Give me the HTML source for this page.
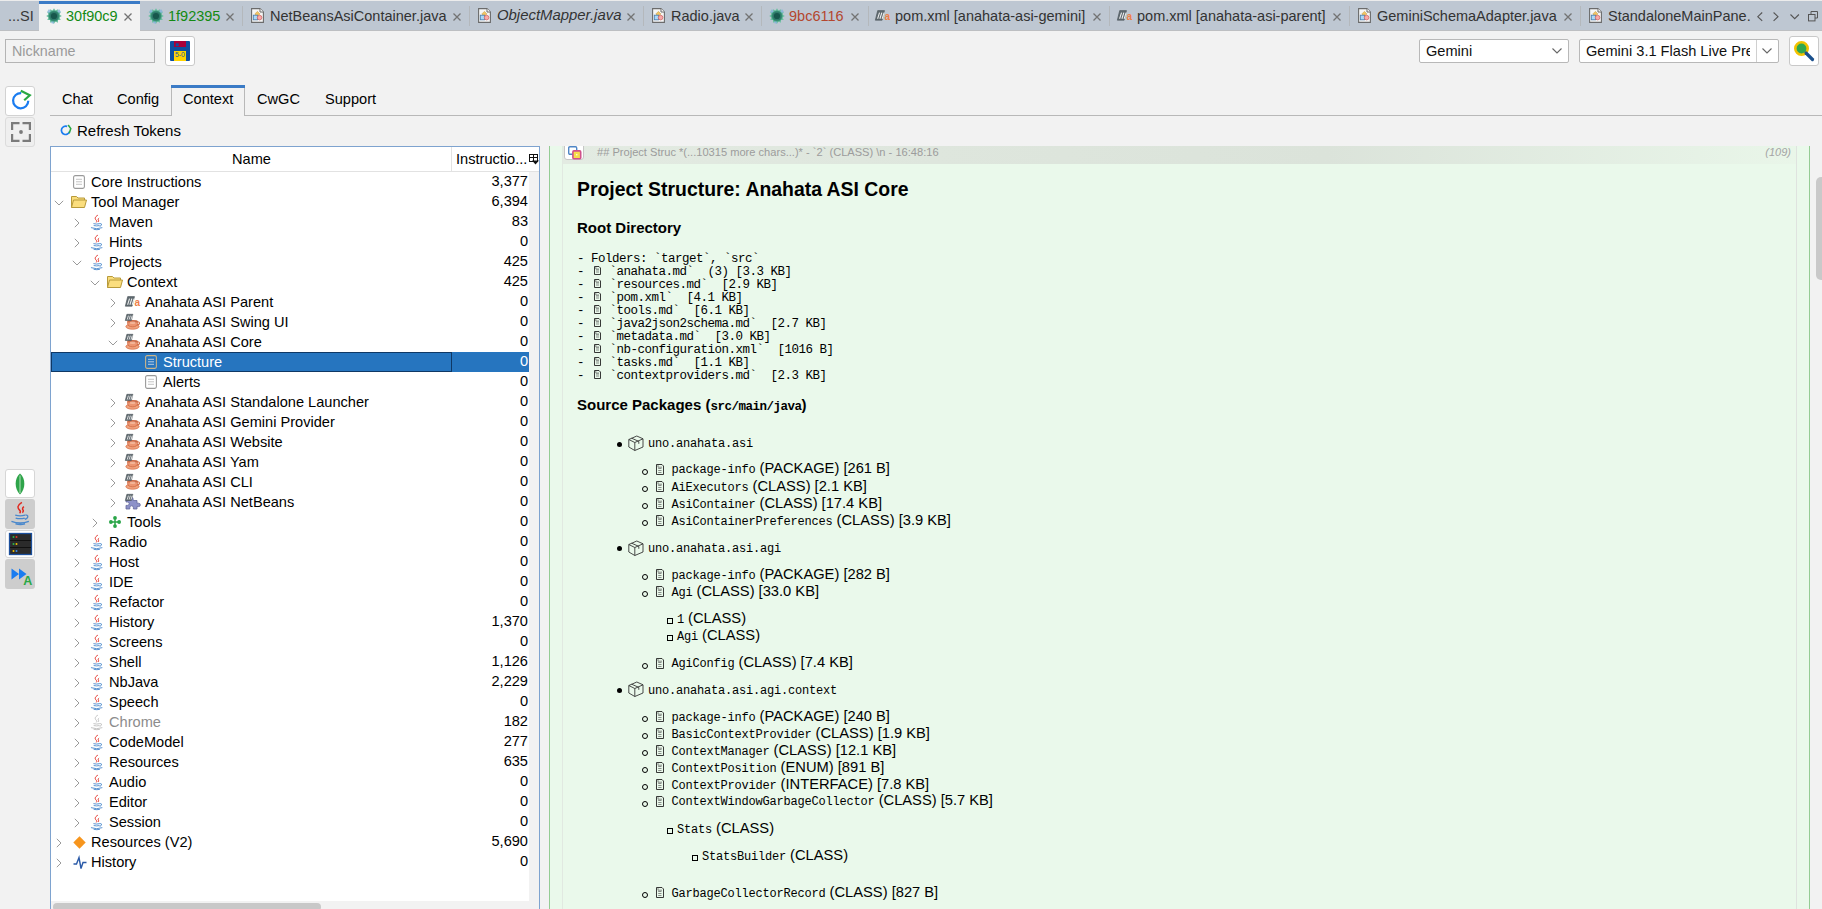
<!DOCTYPE html>
<html><head><meta charset="utf-8"><title>Context</title>
<style>
html,body{margin:0;padding:0;}
body{width:1822px;height:909px;overflow:hidden;background:#f2f2f2;position:relative;font-family:"Liberation Sans",sans-serif;}
.t{position:absolute;white-space:pre;}
.b{position:absolute;box-sizing:border-box;}
svg{position:absolute;overflow:visible;}
</style></head><body>

<div class="b" style="left:0px;top:0px;width:1822px;height:1px;background:#ececec"></div>
<div class="b" style="left:0px;top:1px;width:1822px;height:29px;background:#bec7d2"></div>
<div class="b" style="left:0px;top:30px;width:1822px;height:1px;background:#bdbfc2"></div>
<div class="b" style="left:39px;top:1px;width:101px;height:31px;background:#f2f2f2"></div>
<div class="b" style="left:39px;top:1px;width:101px;height:3px;background:#3b7bc6"></div>
<div class="b" style="left:242px;top:6px;width:1px;height:20px;background:#b4b8bc"></div>
<div class="b" style="left:469px;top:6px;width:1px;height:20px;background:#b4b8bc"></div>
<div class="b" style="left:643px;top:6px;width:1px;height:20px;background:#b4b8bc"></div>
<div class="b" style="left:761px;top:6px;width:1px;height:20px;background:#b4b8bc"></div>
<div class="b" style="left:868px;top:6px;width:1px;height:20px;background:#b4b8bc"></div>
<div class="b" style="left:1109px;top:6px;width:1px;height:20px;background:#b4b8bc"></div>
<div class="b" style="left:1349px;top:6px;width:1px;height:20px;background:#b4b8bc"></div>
<div class="b" style="left:1580px;top:6px;width:1px;height:20px;background:#b4b8bc"></div>
<div class="t" style="left:8px;top:5.58px;height:20px;line-height:20px;font-size:14.5px;color:#383838;font-family:'Liberation Sans', sans-serif;font-weight:400;font-style:normal;">...SI</div>
<svg style="left:46px;top:8px" width="16" height="16" viewBox="0 0 16 16">
<polygon points="8.00,0.20 9.45,2.59 11.90,1.25 11.96,4.04 14.75,4.10 13.41,6.55 15.80,8.00 13.41,9.45 14.75,11.90 11.96,11.96 11.90,14.75 9.45,13.41 8.00,15.80 6.55,13.41 4.10,14.75 4.04,11.96 1.25,11.90 2.59,9.45 0.20,8.00 2.59,6.55 1.25,4.10 4.04,4.04 4.10,1.25 6.55,2.59" fill="#6cbfa0"/>
<path d="M8 8L1 4L3 1Z M8 8L15 4L13 1Z M8 8L8 15.8L5 15Z" fill="#82b4d8" opacity="0.8"/>
<circle cx="8" cy="8" r="5.6" fill="#3d9a7a"/>
<circle cx="8" cy="8" r="4.6" fill="#2e7a6a"/>
<circle cx="8" cy="8" r="3.1" fill="#17574c"/>
</svg>
<div class="t" style="left:66px;top:5.58px;height:20px;line-height:20px;font-size:14.5px;color:#138a13;font-family:'Liberation Sans', sans-serif;font-weight:400;font-style:normal;">30f90c9</div>
<svg style="left:124px;top:12.6px" width="8" height="8" viewBox="0 0 8 8"><path d="M0.5 0.5L7.5 7.5M7.5 0.5L0.5 7.5" stroke="#737373" stroke-width="1.3"/></svg>
<svg style="left:148px;top:8px" width="16" height="16" viewBox="0 0 16 16">
<polygon points="8.00,0.20 9.45,2.59 11.90,1.25 11.96,4.04 14.75,4.10 13.41,6.55 15.80,8.00 13.41,9.45 14.75,11.90 11.96,11.96 11.90,14.75 9.45,13.41 8.00,15.80 6.55,13.41 4.10,14.75 4.04,11.96 1.25,11.90 2.59,9.45 0.20,8.00 2.59,6.55 1.25,4.10 4.04,4.04 4.10,1.25 6.55,2.59" fill="#6cbfa0"/>
<path d="M8 8L1 4L3 1Z M8 8L15 4L13 1Z M8 8L8 15.8L5 15Z" fill="#82b4d8" opacity="0.8"/>
<circle cx="8" cy="8" r="5.6" fill="#3d9a7a"/>
<circle cx="8" cy="8" r="4.6" fill="#2e7a6a"/>
<circle cx="8" cy="8" r="3.1" fill="#17574c"/>
</svg>
<div class="t" style="left:168px;top:5.58px;height:20px;line-height:20px;font-size:14.5px;color:#138a13;font-family:'Liberation Sans', sans-serif;font-weight:400;font-style:normal;">1f92395</div>
<svg style="left:226px;top:12.6px" width="8" height="8" viewBox="0 0 8 8"><path d="M0.5 0.5L7.5 7.5M7.5 0.5L0.5 7.5" stroke="#737373" stroke-width="1.3"/></svg>
<svg style="left:251px;top:8px" width="13" height="15" viewBox="0 0 13 15">
<path d="M0.6 0.6H9L12.4 4V14.4H0.6Z" fill="#f6f6f6" stroke="#6b6b6b" stroke-width="1.1"/>
<path d="M9 0.6V4H12.4" fill="#fff" stroke="#6b6b6b" stroke-width="1"/>
<path d="M6.4 3.4L8.9 5.9L6.4 8.4L3.9 5.9Z" fill="#f2c463" stroke="#c9a045" stroke-width="0.6"/>
<rect x="2.3" y="7.2" width="4.2" height="4.6" fill="#a9d9f9" stroke="#4f80ae" stroke-width="0.9"/>
<circle cx="8.6" cy="9.6" r="2.3" fill="#f9a9a9" stroke="#cf6a6a" stroke-width="0.8"/>
</svg>
<div class="t" style="left:270px;top:5.58px;height:20px;line-height:20px;font-size:14.5px;color:#333;font-family:'Liberation Sans', sans-serif;font-weight:400;font-style:normal;">NetBeansAsiContainer.java</div>
<svg style="left:453px;top:12.6px" width="8" height="8" viewBox="0 0 8 8"><path d="M0.5 0.5L7.5 7.5M7.5 0.5L0.5 7.5" stroke="#737373" stroke-width="1.3"/></svg>
<svg style="left:478px;top:8px" width="13" height="15" viewBox="0 0 13 15">
<path d="M0.6 0.6H9L12.4 4V14.4H0.6Z" fill="#f6f6f6" stroke="#6b6b6b" stroke-width="1.1"/>
<path d="M9 0.6V4H12.4" fill="#fff" stroke="#6b6b6b" stroke-width="1"/>
<path d="M6.4 3.4L8.9 5.9L6.4 8.4L3.9 5.9Z" fill="#f2c463" stroke="#c9a045" stroke-width="0.6"/>
<rect x="2.3" y="7.2" width="4.2" height="4.6" fill="#a9d9f9" stroke="#4f80ae" stroke-width="0.9"/>
<circle cx="8.6" cy="9.6" r="2.3" fill="#f9a9a9" stroke="#cf6a6a" stroke-width="0.8"/>
</svg>
<div class="t" style="left:497px;top:4.94px;height:21px;line-height:21px;font-size:14.9px;color:#333;font-family:'Liberation Sans', sans-serif;font-weight:400;font-style:italic;">ObjectMapper.java</div>
<svg style="left:627px;top:12.6px" width="8" height="8" viewBox="0 0 8 8"><path d="M0.5 0.5L7.5 7.5M7.5 0.5L0.5 7.5" stroke="#737373" stroke-width="1.3"/></svg>
<svg style="left:652px;top:8px" width="13" height="15" viewBox="0 0 13 15">
<path d="M0.6 0.6H9L12.4 4V14.4H0.6Z" fill="#f6f6f6" stroke="#6b6b6b" stroke-width="1.1"/>
<path d="M9 0.6V4H12.4" fill="#fff" stroke="#6b6b6b" stroke-width="1"/>
<path d="M6.4 3.4L8.9 5.9L6.4 8.4L3.9 5.9Z" fill="#f2c463" stroke="#c9a045" stroke-width="0.6"/>
<rect x="2.3" y="7.2" width="4.2" height="4.6" fill="#a9d9f9" stroke="#4f80ae" stroke-width="0.9"/>
<circle cx="8.6" cy="9.6" r="2.3" fill="#f9a9a9" stroke="#cf6a6a" stroke-width="0.8"/>
</svg>
<div class="t" style="left:671px;top:5.58px;height:20px;line-height:20px;font-size:14.5px;color:#333;font-family:'Liberation Sans', sans-serif;font-weight:400;font-style:normal;">Radio.java</div>
<svg style="left:745px;top:12.6px" width="8" height="8" viewBox="0 0 8 8"><path d="M0.5 0.5L7.5 7.5M7.5 0.5L0.5 7.5" stroke="#737373" stroke-width="1.3"/></svg>
<svg style="left:769px;top:8px" width="16" height="16" viewBox="0 0 16 16">
<polygon points="8.00,0.20 9.45,2.59 11.90,1.25 11.96,4.04 14.75,4.10 13.41,6.55 15.80,8.00 13.41,9.45 14.75,11.90 11.96,11.96 11.90,14.75 9.45,13.41 8.00,15.80 6.55,13.41 4.10,14.75 4.04,11.96 1.25,11.90 2.59,9.45 0.20,8.00 2.59,6.55 1.25,4.10 4.04,4.04 4.10,1.25 6.55,2.59" fill="#6cbfa0"/>
<path d="M8 8L1 4L3 1Z M8 8L15 4L13 1Z M8 8L8 15.8L5 15Z" fill="#82b4d8" opacity="0.8"/>
<circle cx="8" cy="8" r="5.6" fill="#3d9a7a"/>
<circle cx="8" cy="8" r="4.6" fill="#2e7a6a"/>
<circle cx="8" cy="8" r="3.1" fill="#17574c"/>
</svg>
<div class="t" style="left:789px;top:5.58px;height:20px;line-height:20px;font-size:14.5px;color:#b4462e;font-family:'Liberation Sans', sans-serif;font-weight:400;font-style:normal;">9bc6116</div>
<svg style="left:851px;top:12.6px" width="8" height="8" viewBox="0 0 8 8"><path d="M0.5 0.5L7.5 7.5M7.5 0.5L0.5 7.5" stroke="#737373" stroke-width="1.3"/></svg>
<svg style="left:875px;top:10px" width="16" height="12" viewBox="0 0 16 12">
<path d="M2.70 0.60H9.50L7.10 10.20H0.30Z" fill="#5f6a70" stroke="#4a5358" stroke-width="0.6" stroke-linejoin="round"/><path d="M4.52 2.71L2.60 8.76" stroke="#f4f4f4" stroke-width="1.01"/><path d="M6.82 2.71L4.90 8.76" stroke="#f4f4f4" stroke-width="1.01"/><path d="M9.12 2.71L7.20 8.76" stroke="#f4f4f4" stroke-width="1.01"/>
<text x="9.4" y="10.2" font-family="Liberation Sans" font-weight="700" font-size="10" fill="#ee7f48">a</text>
</svg>
<div class="t" style="left:895px;top:5.58px;height:20px;line-height:20px;font-size:14.5px;color:#333;font-family:'Liberation Sans', sans-serif;font-weight:400;font-style:normal;">pom.xml [anahata-asi-gemini]</div>
<svg style="left:1093px;top:12.6px" width="8" height="8" viewBox="0 0 8 8"><path d="M0.5 0.5L7.5 7.5M7.5 0.5L0.5 7.5" stroke="#737373" stroke-width="1.3"/></svg>
<svg style="left:1117px;top:10px" width="16" height="12" viewBox="0 0 16 12">
<path d="M2.70 0.60H9.50L7.10 10.20H0.30Z" fill="#5f6a70" stroke="#4a5358" stroke-width="0.6" stroke-linejoin="round"/><path d="M4.52 2.71L2.60 8.76" stroke="#f4f4f4" stroke-width="1.01"/><path d="M6.82 2.71L4.90 8.76" stroke="#f4f4f4" stroke-width="1.01"/><path d="M9.12 2.71L7.20 8.76" stroke="#f4f4f4" stroke-width="1.01"/>
<text x="9.4" y="10.2" font-family="Liberation Sans" font-weight="700" font-size="10" fill="#ee7f48">a</text>
</svg>
<div class="t" style="left:1137px;top:5.58px;height:20px;line-height:20px;font-size:14.5px;color:#333;font-family:'Liberation Sans', sans-serif;font-weight:400;font-style:normal;">pom.xml [anahata-asi-parent]</div>
<svg style="left:1333px;top:12.6px" width="8" height="8" viewBox="0 0 8 8"><path d="M0.5 0.5L7.5 7.5M7.5 0.5L0.5 7.5" stroke="#737373" stroke-width="1.3"/></svg>
<svg style="left:1358px;top:8px" width="13" height="15" viewBox="0 0 13 15">
<path d="M0.6 0.6H9L12.4 4V14.4H0.6Z" fill="#f6f6f6" stroke="#6b6b6b" stroke-width="1.1"/>
<path d="M9 0.6V4H12.4" fill="#fff" stroke="#6b6b6b" stroke-width="1"/>
<path d="M6.4 3.4L8.9 5.9L6.4 8.4L3.9 5.9Z" fill="#f2c463" stroke="#c9a045" stroke-width="0.6"/>
<rect x="2.3" y="7.2" width="4.2" height="4.6" fill="#a9d9f9" stroke="#4f80ae" stroke-width="0.9"/>
<circle cx="8.6" cy="9.6" r="2.3" fill="#f9a9a9" stroke="#cf6a6a" stroke-width="0.8"/>
</svg>
<div class="t" style="left:1377px;top:5.58px;height:20px;line-height:20px;font-size:14.5px;color:#333;font-family:'Liberation Sans', sans-serif;font-weight:400;font-style:normal;">GeminiSchemaAdapter.java</div>
<svg style="left:1564px;top:12.6px" width="8" height="8" viewBox="0 0 8 8"><path d="M0.5 0.5L7.5 7.5M7.5 0.5L0.5 7.5" stroke="#737373" stroke-width="1.3"/></svg>
<svg style="left:1589px;top:8px" width="13" height="15" viewBox="0 0 13 15">
<path d="M0.6 0.6H9L12.4 4V14.4H0.6Z" fill="#f6f6f6" stroke="#6b6b6b" stroke-width="1.1"/>
<path d="M9 0.6V4H12.4" fill="#fff" stroke="#6b6b6b" stroke-width="1"/>
<path d="M6.4 3.4L8.9 5.9L6.4 8.4L3.9 5.9Z" fill="#f2c463" stroke="#c9a045" stroke-width="0.6"/>
<rect x="2.3" y="7.2" width="4.2" height="4.6" fill="#a9d9f9" stroke="#4f80ae" stroke-width="0.9"/>
<circle cx="8.6" cy="9.6" r="2.3" fill="#f9a9a9" stroke="#cf6a6a" stroke-width="0.8"/>
</svg>
<div class="t" style="left:1608px;top:5.58px;height:20px;line-height:20px;font-size:14.5px;color:#333;font-family:'Liberation Sans', sans-serif;font-weight:400;font-style:normal;">StandaloneMainPane.</div>
<svg style="left:1757px;top:12px" width="6" height="10" viewBox="0 0 6 10"><path d="M5.2 0.5L0.8 4.7L5.2 8.9" fill="none" stroke="#555" stroke-width="1.1"/></svg>
<svg style="left:1773px;top:12px" width="6" height="10" viewBox="0 0 6 10"><path d="M0.6 0.5L5 4.7L0.6 8.9" fill="none" stroke="#555" stroke-width="1.1"/></svg>
<svg style="left:1790px;top:14px" width="10" height="6" viewBox="0 0 10 6"><path d="M0.5 0.5L4.7 4.7L8.9 0.5" fill="none" stroke="#555" stroke-width="1.1"/></svg>
<svg style="left:1808px;top:11px" width="11" height="11" viewBox="0 0 11 11"><rect x="0.5" y="3.5" width="6.5" height="6.4" fill="none" stroke="#555"/><path d="M3 3.5V0.5H9.5V7H7" fill="none" stroke="#555"/></svg>
<div class="b" style="left:5px;top:39px;width:150px;height:24px;border:1px solid #b4b4b4;background:#f2f2f2"></div>
<div class="t" style="left:12px;top:40.65px;height:20px;line-height:20px;font-size:14.3px;color:#9a9a9a;font-family:'Liberation Sans', sans-serif;font-weight:400;font-style:normal;">Nickname</div>
<div class="b" style="left:165px;top:36px;width:30px;height:30px;border:1px solid #c9c9c9;background:#fff;border-radius:3px"></div>
<svg style="left:170px;top:41px" width="20" height="20" viewBox="0 0 20 20">
<rect x="0" y="0" width="20" height="20" rx="1" fill="#0d4fa0"/>
<rect x="4" y="0" width="12" height="6" fill="#a8003a"/>
<rect x="5.8" y="2.3" width="2.9" height="2.9" fill="#0d4fa0"/>
<rect x="4" y="10" width="12" height="10" fill="#ffd400"/>
<text x="10" y="16.3" text-anchor="middle" font-family="Liberation Sans" font-size="6.8" fill="#1d5aa0" transform="scale(1 1)">5-0</text>
</svg>
<div class="b" style="left:1419px;top:39px;width:150px;height:24px;border:1px solid #b8b8b8;background:#fff;border-radius:2px"></div>
<div class="t" style="left:1426px;top:40.94px;height:20px;line-height:20px;font-size:14.6px;color:#111;font-family:'Liberation Sans', sans-serif;font-weight:400;font-style:normal;">Gemini</div>
<svg style="left:1552px;top:48px" width="10" height="6" viewBox="0 0 10 6"><path d="M0.5 0.5L5 5L9.5 0.5" fill="none" stroke="#666" stroke-width="1.1"/></svg>
<div class="b" style="left:1579px;top:39px;width:200px;height:24px;border:1px solid #b8b8b8;background:#fff;border-radius:2px"></div>
<div class="t" style="left:1586px;top:39px;width:164px;height:24px;overflow:hidden"><div class="t" style="left:0;top:0;line-height:24px;font-size:14.6px;color:#111">Gemini 3.1 Flash Live Preview</div></div>
<div class="b" style="left:1756px;top:40px;width:1px;height:22px;background:#d0d0d0"></div>
<svg style="left:1762px;top:48px" width="10" height="6" viewBox="0 0 10 6"><path d="M0.5 0.5L5 5L9.5 0.5" fill="none" stroke="#666" stroke-width="1.1"/></svg>
<div class="b" style="left:1789px;top:36px;width:30px;height:30px;border:1px solid #c9c9c9;background:#fff;border-radius:3px"></div>
<svg style="left:1793px;top:40px" width="22" height="22" viewBox="0 0 22 22">
<circle cx="8.5" cy="8.5" r="6.2" fill="#2fa84f" stroke="#f2c200" stroke-width="2.6"/>
<path d="M13 13L19.5 19.5" stroke="#1a4f8c" stroke-width="3.2" stroke-linecap="round"/>
</svg>
<div class="b" style="left:5px;top:86px;width:30px;height:30px;border:1px solid #d2d2d2;background:#fff;border-radius:3px"></div>
<svg style="left:10px;top:89px" width="22" height="22" viewBox="0 0 22 22">
<path d="M18.3 11.8A7.6 7.6 0 1 1 11.2 4.1" fill="none" stroke="#1a7cf0" stroke-width="2.2"/>
<path d="M10.8 1.8L19.8 6.2L14.2 11.2" fill="none" stroke="#2aa843" stroke-width="2.2"/>
</svg>
<div class="b" style="left:5px;top:117px;width:30px;height:30px;border:1px solid #dcdcdc;background:#efefef;border-radius:3px"></div>
<svg style="left:11px;top:122px" width="20" height="20" viewBox="0 0 20 20">
<path d="M1.1 8V1.1H8.5M11.5 1.1H18.9V8M18.9 12V18.9H11.5M8.5 18.9H1.1V12" fill="none" stroke="#7b7b7b" stroke-width="2.2"/>
<circle cx="10" cy="10" r="1.9" fill="#7b7b7b"/>
</svg>
<div class="b" style="left:5px;top:469px;width:30px;height:29px;border:1px solid #d6d6d6;background:#fff;border-radius:3px"></div>
<svg style="left:15px;top:473px" width="10" height="22" viewBox="0 0 10 22">
<path d="M5 0.5C10.8 5 10.8 16 5 21.5C-0.8 16 -0.8 5 5 0.5Z" fill="#2ea44a"/>
<path d="M5 2.5V20" stroke="#d9efd9" stroke-width="0.8"/>
</svg>
<div class="b" style="left:5px;top:499px;width:30px;height:30px;background:#cdcdcd;border-radius:3px"></div>
<svg style="left:10px;top:502px" width="20.3" height="23.2" viewBox="0 0 14 16">
<path d="M8.2 0.2C4.6 2.4 5.2 4.2 6.6 5.6C7.4 6.4 7.2 7.2 6.6 7.8M9.6 3.2C8.2 4.2 8.6 5 9 5.6C9.3 6.1 9.1 6.8 8.5 7.3" fill="none" stroke="#e0281e" stroke-width="1"/>
<path d="M3.6 9.1Q7 10 10.4 9.1M3.9 11.1Q7 11.9 10.1 11.1M10.6 8.9Q13.4 9.1 11.6 11.3L10.2 12M1 13.3Q7 15.6 13 13.3M3.8 15.1Q7.2 15.9 10.4 15.1" fill="none" stroke="#4a88cc" stroke-width="0.95"/>
</svg>
<div class="b" style="left:5px;top:530px;width:30px;height:28px;border:1px solid #d6d6d6;background:#fff;border-radius:3px"></div>
<svg style="left:9px;top:533px" width="23" height="22" viewBox="0 0 23 22">
<rect x="0.5" y="0.5" width="22" height="21" fill="#2b2b2b" stroke="#1b4f9c" stroke-width="1.3"/>
<path d="M1 7.5H22M1 14.5H22" stroke="#111" stroke-width="1"/>
<circle cx="4.5" cy="4" r="1" fill="#2db84a"/><circle cx="7.5" cy="4" r="1" fill="#e23a2a"/>
<circle cx="4.5" cy="11" r="1" fill="#2db84a"/><circle cx="7.5" cy="11" r="1" fill="#f2c200"/>
<circle cx="4.5" cy="18" r="1" fill="#f2c200"/><circle cx="7.5" cy="18" r="1" fill="#3d8ef0"/>
</svg>
<div class="b" style="left:5px;top:559px;width:30px;height:30px;background:#cdcdcd;border-radius:3px"></div>
<svg style="left:11px;top:568px" width="23" height="18" viewBox="0 0 23 18">
<path d="M0.5 0.5L8 6L0.5 11.5Z M8 0.5L15.5 6L8 11.5Z" fill="#1a7cf0"/>
<text x="12.3" y="16.5" font-family="Liberation Sans" font-weight="700" font-size="12.5" fill="#2aa843">A</text>
</svg>
<div class="b" style="left:50px;top:115px;width:1772px;height:1px;background:#b8b8b8"></div>
<div class="b" style="left:171px;top:85px;width:74px;height:31px;background:#f2f2f2;border-left:1px solid #b8b8b8;border-right:1px solid #b8b8b8"></div>
<div class="b" style="left:171px;top:85px;width:74px;height:3px;background:#3b7bc6"></div>
<div class="t" style="left:62px;top:89.14px;height:20px;line-height:20px;font-size:14.6px;color:#000;font-family:'Liberation Sans', sans-serif;font-weight:400;font-style:normal;">Chat</div>
<div class="t" style="left:117px;top:89.14px;height:20px;line-height:20px;font-size:14.6px;color:#000;font-family:'Liberation Sans', sans-serif;font-weight:400;font-style:normal;">Config</div>
<div class="t" style="left:183px;top:89.14px;height:20px;line-height:20px;font-size:14.6px;color:#000;font-family:'Liberation Sans', sans-serif;font-weight:400;font-style:normal;">Context</div>
<div class="t" style="left:257px;top:89.14px;height:20px;line-height:20px;font-size:14.6px;color:#000;font-family:'Liberation Sans', sans-serif;font-weight:400;font-style:normal;">CwGC</div>
<div class="t" style="left:325px;top:89.14px;height:20px;line-height:20px;font-size:14.6px;color:#000;font-family:'Liberation Sans', sans-serif;font-weight:400;font-style:normal;">Support</div>
<svg style="left:60px;top:124px" width="13" height="12" viewBox="0 0 13 12">
<path d="M9.6 7.6A4.2 4.2 0 1 1 7.2 2.4" fill="none" stroke="#1a7cf0" stroke-width="1.7"/>
<path d="M8.2 1L10.8 4.6L9.2 9.2" fill="none" stroke="#2aa843" stroke-width="1.5"/>
</svg>
<div class="t" style="left:77px;top:119.80px;height:21px;line-height:21px;font-size:15px;color:#000;font-family:'Liberation Sans', sans-serif;font-weight:400;font-style:normal;">Refresh Tokens</div>
<div class="b" style="left:50px;top:146px;width:490px;height:770px;border:1px solid #7ea3cf;background:#f2f2f2"></div>
<div class="b" style="left:51px;top:147px;width:488px;height:24px;background:#fff"></div>
<div class="b" style="left:51px;top:171px;width:488px;height:1px;background:#e2e2e2"></div>
<div class="b" style="left:451px;top:147px;width:1px;height:24px;background:#e2e2e2"></div>
<div class="t" style="left:232px;top:148.54px;height:20px;line-height:20px;font-size:14.6px;color:#000;font-family:'Liberation Sans', sans-serif;font-weight:400;font-style:normal;">Name</div>
<div class="t" style="left:456px;top:148.54px;height:20px;line-height:20px;font-size:14.6px;color:#000;font-family:'Liberation Sans', sans-serif;font-weight:400;font-style:normal;">Instructio...</div>
<svg style="left:529px;top:154px" width="10" height="11" viewBox="0 0 10 11">
<rect x="0.5" y="0.5" width="8" height="7" fill="#fff" stroke="#111" stroke-width="1"/>
<path d="M0.5 3.5H8.5M4.5 0.5V7.5" stroke="#111" stroke-width="1"/>
<path d="M3 6.5H10L6.5 10.5Z" fill="#111"/>
</svg>
<div class="b" style="left:51px;top:172px;width:478px;height:729px;background:#fff"></div>
<svg style="left:73px;top:175px" width="12" height="14" viewBox="0 0 12 14">
<rect x="0.6" y="0.6" width="10.8" height="12.8" rx="1.6" fill="#fff" stroke="#9a9a9a" stroke-width="1.1"/>
<path d="M3 4.3H9M3 6.8H9M3 9.3H9" stroke="#bdbdbd" stroke-width="0.9"/>
</svg>
<div class="t" style="left:91px;top:171.84px;height:20px;line-height:20px;font-size:14.6px;color:#000;font-family:'Liberation Sans', sans-serif;font-weight:400;font-style:normal;">Core Instructions</div>
<div class="t" style="left:400px;width:128px;text-align:right;top:171px;height:20px;line-height:20px;font-size:14.6px;color:#000">3,377</div>
<svg style="left:53.5px;top:199.5px" width="10" height="6" viewBox="0 0 10 6"><path d="M0.8 0.8L5 5L9.2 0.8" fill="none" stroke="#9a9a9a" stroke-width="1"/></svg>
<svg style="left:71px;top:196px" width="16" height="12" viewBox="0 0 16 12">
<path d="M0.5 11.5V0.5H5.5L7 2H13.5V4" fill="#f9dd7c" stroke="#b89a3a" stroke-width="1"/>
<path d="M0.5 11.5L2.5 4H15.5L13.5 11.5Z" fill="#fbde7e" stroke="#b89a3a" stroke-width="1"/>
</svg>
<div class="t" style="left:91px;top:191.84px;height:20px;line-height:20px;font-size:14.6px;color:#000;font-family:'Liberation Sans', sans-serif;font-weight:400;font-style:normal;">Tool Manager</div>
<div class="t" style="left:400px;width:128px;text-align:right;top:191px;height:20px;line-height:20px;font-size:14.6px;color:#000">6,394</div>
<svg style="left:73.5px;top:217.5px" width="6" height="10" viewBox="0 0 6 10"><path d="M0.8 0.8L5 5L0.8 9.2" fill="none" stroke="#9a9a9a" stroke-width="1"/></svg>
<svg style="left:89.5px;top:214.5px" width="13.3" height="15.2" viewBox="0 0 14 16">
<path d="M8.2 0.2C4.6 2.4 5.2 4.2 6.6 5.6C7.4 6.4 7.2 7.2 6.6 7.8M9.6 3.2C8.2 4.2 8.6 5 9 5.6C9.3 6.1 9.1 6.8 8.5 7.3" fill="none" stroke="#e0281e" stroke-width="1"/>
<path d="M3.6 9.1Q7 10 10.4 9.1M3.9 11.1Q7 11.9 10.1 11.1M10.6 8.9Q13.4 9.1 11.6 11.3L10.2 12M1 13.3Q7 15.6 13 13.3M3.8 15.1Q7.2 15.9 10.4 15.1" fill="none" stroke="#4a88cc" stroke-width="0.95"/>
</svg>
<div class="t" style="left:109px;top:211.84px;height:20px;line-height:20px;font-size:14.6px;color:#000;font-family:'Liberation Sans', sans-serif;font-weight:400;font-style:normal;">Maven</div>
<div class="t" style="left:400px;width:128px;text-align:right;top:211px;height:20px;line-height:20px;font-size:14.6px;color:#000">83</div>
<svg style="left:73.5px;top:237.5px" width="6" height="10" viewBox="0 0 6 10"><path d="M0.8 0.8L5 5L0.8 9.2" fill="none" stroke="#9a9a9a" stroke-width="1"/></svg>
<svg style="left:89.5px;top:234.5px" width="13.3" height="15.2" viewBox="0 0 14 16">
<path d="M8.2 0.2C4.6 2.4 5.2 4.2 6.6 5.6C7.4 6.4 7.2 7.2 6.6 7.8M9.6 3.2C8.2 4.2 8.6 5 9 5.6C9.3 6.1 9.1 6.8 8.5 7.3" fill="none" stroke="#e0281e" stroke-width="1"/>
<path d="M3.6 9.1Q7 10 10.4 9.1M3.9 11.1Q7 11.9 10.1 11.1M10.6 8.9Q13.4 9.1 11.6 11.3L10.2 12M1 13.3Q7 15.6 13 13.3M3.8 15.1Q7.2 15.9 10.4 15.1" fill="none" stroke="#4a88cc" stroke-width="0.95"/>
</svg>
<div class="t" style="left:109px;top:231.84px;height:20px;line-height:20px;font-size:14.6px;color:#000;font-family:'Liberation Sans', sans-serif;font-weight:400;font-style:normal;">Hints</div>
<div class="t" style="left:400px;width:128px;text-align:right;top:231px;height:20px;line-height:20px;font-size:14.6px;color:#000">0</div>
<svg style="left:71.5px;top:259.5px" width="10" height="6" viewBox="0 0 10 6"><path d="M0.8 0.8L5 5L9.2 0.8" fill="none" stroke="#9a9a9a" stroke-width="1"/></svg>
<svg style="left:89.5px;top:254.5px" width="13.3" height="15.2" viewBox="0 0 14 16">
<path d="M8.2 0.2C4.6 2.4 5.2 4.2 6.6 5.6C7.4 6.4 7.2 7.2 6.6 7.8M9.6 3.2C8.2 4.2 8.6 5 9 5.6C9.3 6.1 9.1 6.8 8.5 7.3" fill="none" stroke="#e0281e" stroke-width="1"/>
<path d="M3.6 9.1Q7 10 10.4 9.1M3.9 11.1Q7 11.9 10.1 11.1M10.6 8.9Q13.4 9.1 11.6 11.3L10.2 12M1 13.3Q7 15.6 13 13.3M3.8 15.1Q7.2 15.9 10.4 15.1" fill="none" stroke="#4a88cc" stroke-width="0.95"/>
</svg>
<div class="t" style="left:109px;top:251.84px;height:20px;line-height:20px;font-size:14.6px;color:#000;font-family:'Liberation Sans', sans-serif;font-weight:400;font-style:normal;">Projects</div>
<div class="t" style="left:400px;width:128px;text-align:right;top:251px;height:20px;line-height:20px;font-size:14.6px;color:#000">425</div>
<svg style="left:89.5px;top:279.5px" width="10" height="6" viewBox="0 0 10 6"><path d="M0.8 0.8L5 5L9.2 0.8" fill="none" stroke="#9a9a9a" stroke-width="1"/></svg>
<svg style="left:107px;top:276px" width="16" height="12" viewBox="0 0 16 12">
<path d="M0.5 11.5V0.5H5.5L7 2H13.5V4" fill="#f9dd7c" stroke="#b89a3a" stroke-width="1"/>
<path d="M0.5 11.5L2.5 4H15.5L13.5 11.5Z" fill="#fbde7e" stroke="#b89a3a" stroke-width="1"/>
</svg>
<div class="t" style="left:127px;top:271.84px;height:20px;line-height:20px;font-size:14.6px;color:#000;font-family:'Liberation Sans', sans-serif;font-weight:400;font-style:normal;">Context</div>
<div class="t" style="left:400px;width:128px;text-align:right;top:271px;height:20px;line-height:20px;font-size:14.6px;color:#000">425</div>
<svg style="left:109.5px;top:297.5px" width="6" height="10" viewBox="0 0 6 10"><path d="M0.8 0.8L5 5L0.8 9.2" fill="none" stroke="#9a9a9a" stroke-width="1"/></svg>
<svg style="left:125px;top:296px" width="16" height="12" viewBox="0 0 16 12">
<path d="M2.70 0.60H9.50L7.10 10.20H0.30Z" fill="#5f6a70" stroke="#4a5358" stroke-width="0.6" stroke-linejoin="round"/><path d="M4.52 2.71L2.60 8.76" stroke="#f4f4f4" stroke-width="1.01"/><path d="M6.82 2.71L4.90 8.76" stroke="#f4f4f4" stroke-width="1.01"/><path d="M9.12 2.71L7.20 8.76" stroke="#f4f4f4" stroke-width="1.01"/>
<text x="9.4" y="10.2" font-family="Liberation Sans" font-weight="700" font-size="10" fill="#ee7f48">a</text>
</svg>
<div class="t" style="left:145px;top:291.84px;height:20px;line-height:20px;font-size:14.6px;color:#000;font-family:'Liberation Sans', sans-serif;font-weight:400;font-style:normal;">Anahata ASI Parent</div>
<div class="t" style="left:400px;width:128px;text-align:right;top:291px;height:20px;line-height:20px;font-size:14.6px;color:#000">0</div>
<svg style="left:109.5px;top:317.5px" width="6" height="10" viewBox="0 0 6 10"><path d="M0.8 0.8L5 5L0.8 9.2" fill="none" stroke="#9a9a9a" stroke-width="1"/></svg>
<svg style="left:125px;top:314px" width="16" height="16" viewBox="0 0 16 16">
<ellipse cx="7.5" cy="12.6" rx="6.6" ry="2.6" fill="#f0a27e" stroke="#d5714a" stroke-width="0.8"/>
<path d="M2.6 7.2H12.6V9.6C12.6 11.6 10.4 12.8 7.6 12.8C4.8 12.8 2.6 11.6 2.6 9.6Z" fill="#ec9570" stroke="#d06a42" stroke-width="0.8"/>
<path d="M12.4 7.8C15.2 7.6 15.3 10.8 12 11" fill="none" stroke="#d06a42" stroke-width="1.1"/>
<ellipse cx="7.6" cy="7.4" rx="5" ry="1.3" fill="#c96a48"/>
<ellipse cx="7.6" cy="8.8" rx="3" ry="1.2" fill="#f7c0a6" opacity="0.8"/>
<path d="M1.85 0.30H7.90L6.35 6.50H0.30Z" fill="#5f6a70" stroke="#4a5358" stroke-width="0.6" stroke-linejoin="round"/><path d="M3.44 1.66L2.20 5.57" stroke="#f4f4f4" stroke-width="0.84"/><path d="M5.34 1.66L4.10 5.57" stroke="#f4f4f4" stroke-width="0.84"/><path d="M7.24 1.66L6.00 5.57" stroke="#f4f4f4" stroke-width="0.84"/>
</svg>
<div class="t" style="left:145px;top:311.84px;height:20px;line-height:20px;font-size:14.6px;color:#000;font-family:'Liberation Sans', sans-serif;font-weight:400;font-style:normal;">Anahata ASI Swing UI</div>
<div class="t" style="left:400px;width:128px;text-align:right;top:311px;height:20px;line-height:20px;font-size:14.6px;color:#000">0</div>
<svg style="left:107.5px;top:339.5px" width="10" height="6" viewBox="0 0 10 6"><path d="M0.8 0.8L5 5L9.2 0.8" fill="none" stroke="#9a9a9a" stroke-width="1"/></svg>
<svg style="left:125px;top:334px" width="16" height="16" viewBox="0 0 16 16">
<ellipse cx="7.5" cy="12.6" rx="6.6" ry="2.6" fill="#f0a27e" stroke="#d5714a" stroke-width="0.8"/>
<path d="M2.6 7.2H12.6V9.6C12.6 11.6 10.4 12.8 7.6 12.8C4.8 12.8 2.6 11.6 2.6 9.6Z" fill="#ec9570" stroke="#d06a42" stroke-width="0.8"/>
<path d="M12.4 7.8C15.2 7.6 15.3 10.8 12 11" fill="none" stroke="#d06a42" stroke-width="1.1"/>
<ellipse cx="7.6" cy="7.4" rx="5" ry="1.3" fill="#c96a48"/>
<ellipse cx="7.6" cy="8.8" rx="3" ry="1.2" fill="#f7c0a6" opacity="0.8"/>
<path d="M1.85 0.30H7.90L6.35 6.50H0.30Z" fill="#5f6a70" stroke="#4a5358" stroke-width="0.6" stroke-linejoin="round"/><path d="M3.44 1.66L2.20 5.57" stroke="#f4f4f4" stroke-width="0.84"/><path d="M5.34 1.66L4.10 5.57" stroke="#f4f4f4" stroke-width="0.84"/><path d="M7.24 1.66L6.00 5.57" stroke="#f4f4f4" stroke-width="0.84"/>
</svg>
<div class="t" style="left:145px;top:331.84px;height:20px;line-height:20px;font-size:14.6px;color:#000;font-family:'Liberation Sans', sans-serif;font-weight:400;font-style:normal;">Anahata ASI Core</div>
<div class="t" style="left:400px;width:128px;text-align:right;top:331px;height:20px;line-height:20px;font-size:14.6px;color:#000">0</div>
<div class="b" style="left:51px;top:352px;width:478px;height:20px;background:#2675bf"></div>
<div class="b" style="left:51px;top:352px;width:401px;height:20px;border:1px solid #0f3865"></div>
<svg style="left:145px;top:355px" width="12" height="14" viewBox="0 0 12 14">
<rect x="0.6" y="0.6" width="10.8" height="12.8" rx="1.6" fill="none" stroke="#c9b48a" stroke-width="1.1"/>
<path d="M3 4.3H9M3 6.8H9M3 9.3H9" stroke="#c8d6e6" stroke-width="0.9"/>
</svg>
<div class="t" style="left:163px;top:351.84px;height:20px;line-height:20px;font-size:14.6px;color:#fff;font-family:'Liberation Sans', sans-serif;font-weight:400;font-style:normal;">Structure</div>
<div class="t" style="left:400px;width:128px;text-align:right;top:351px;height:20px;line-height:20px;font-size:14.6px;color:#fff">0</div>
<svg style="left:145px;top:375px" width="12" height="14" viewBox="0 0 12 14">
<rect x="0.6" y="0.6" width="10.8" height="12.8" rx="1.6" fill="#fff" stroke="#9a9a9a" stroke-width="1.1"/>
<path d="M3 4.3H9M3 6.8H9M3 9.3H9" stroke="#bdbdbd" stroke-width="0.9"/>
</svg>
<div class="t" style="left:163px;top:371.84px;height:20px;line-height:20px;font-size:14.6px;color:#000;font-family:'Liberation Sans', sans-serif;font-weight:400;font-style:normal;">Alerts</div>
<div class="t" style="left:400px;width:128px;text-align:right;top:371px;height:20px;line-height:20px;font-size:14.6px;color:#000">0</div>
<svg style="left:109.5px;top:397.5px" width="6" height="10" viewBox="0 0 6 10"><path d="M0.8 0.8L5 5L0.8 9.2" fill="none" stroke="#9a9a9a" stroke-width="1"/></svg>
<svg style="left:125px;top:394px" width="16" height="16" viewBox="0 0 16 16">
<ellipse cx="7.5" cy="12.6" rx="6.6" ry="2.6" fill="#f0a27e" stroke="#d5714a" stroke-width="0.8"/>
<path d="M2.6 7.2H12.6V9.6C12.6 11.6 10.4 12.8 7.6 12.8C4.8 12.8 2.6 11.6 2.6 9.6Z" fill="#ec9570" stroke="#d06a42" stroke-width="0.8"/>
<path d="M12.4 7.8C15.2 7.6 15.3 10.8 12 11" fill="none" stroke="#d06a42" stroke-width="1.1"/>
<ellipse cx="7.6" cy="7.4" rx="5" ry="1.3" fill="#c96a48"/>
<ellipse cx="7.6" cy="8.8" rx="3" ry="1.2" fill="#f7c0a6" opacity="0.8"/>
<path d="M1.85 0.30H7.90L6.35 6.50H0.30Z" fill="#5f6a70" stroke="#4a5358" stroke-width="0.6" stroke-linejoin="round"/><path d="M3.44 1.66L2.20 5.57" stroke="#f4f4f4" stroke-width="0.84"/><path d="M5.34 1.66L4.10 5.57" stroke="#f4f4f4" stroke-width="0.84"/><path d="M7.24 1.66L6.00 5.57" stroke="#f4f4f4" stroke-width="0.84"/>
</svg>
<div class="t" style="left:145px;top:391.84px;height:20px;line-height:20px;font-size:14.6px;color:#000;font-family:'Liberation Sans', sans-serif;font-weight:400;font-style:normal;">Anahata ASI Standalone Launcher</div>
<div class="t" style="left:400px;width:128px;text-align:right;top:391px;height:20px;line-height:20px;font-size:14.6px;color:#000">0</div>
<svg style="left:109.5px;top:417.5px" width="6" height="10" viewBox="0 0 6 10"><path d="M0.8 0.8L5 5L0.8 9.2" fill="none" stroke="#9a9a9a" stroke-width="1"/></svg>
<svg style="left:125px;top:414px" width="16" height="16" viewBox="0 0 16 16">
<ellipse cx="7.5" cy="12.6" rx="6.6" ry="2.6" fill="#f0a27e" stroke="#d5714a" stroke-width="0.8"/>
<path d="M2.6 7.2H12.6V9.6C12.6 11.6 10.4 12.8 7.6 12.8C4.8 12.8 2.6 11.6 2.6 9.6Z" fill="#ec9570" stroke="#d06a42" stroke-width="0.8"/>
<path d="M12.4 7.8C15.2 7.6 15.3 10.8 12 11" fill="none" stroke="#d06a42" stroke-width="1.1"/>
<ellipse cx="7.6" cy="7.4" rx="5" ry="1.3" fill="#c96a48"/>
<ellipse cx="7.6" cy="8.8" rx="3" ry="1.2" fill="#f7c0a6" opacity="0.8"/>
<path d="M1.85 0.30H7.90L6.35 6.50H0.30Z" fill="#5f6a70" stroke="#4a5358" stroke-width="0.6" stroke-linejoin="round"/><path d="M3.44 1.66L2.20 5.57" stroke="#f4f4f4" stroke-width="0.84"/><path d="M5.34 1.66L4.10 5.57" stroke="#f4f4f4" stroke-width="0.84"/><path d="M7.24 1.66L6.00 5.57" stroke="#f4f4f4" stroke-width="0.84"/>
</svg>
<div class="t" style="left:145px;top:411.84px;height:20px;line-height:20px;font-size:14.6px;color:#000;font-family:'Liberation Sans', sans-serif;font-weight:400;font-style:normal;">Anahata ASI Gemini Provider</div>
<div class="t" style="left:400px;width:128px;text-align:right;top:411px;height:20px;line-height:20px;font-size:14.6px;color:#000">0</div>
<svg style="left:109.5px;top:437.5px" width="6" height="10" viewBox="0 0 6 10"><path d="M0.8 0.8L5 5L0.8 9.2" fill="none" stroke="#9a9a9a" stroke-width="1"/></svg>
<svg style="left:125px;top:434px" width="16" height="16" viewBox="0 0 16 16">
<ellipse cx="7.5" cy="12.6" rx="6.6" ry="2.6" fill="#f0a27e" stroke="#d5714a" stroke-width="0.8"/>
<path d="M2.6 7.2H12.6V9.6C12.6 11.6 10.4 12.8 7.6 12.8C4.8 12.8 2.6 11.6 2.6 9.6Z" fill="#ec9570" stroke="#d06a42" stroke-width="0.8"/>
<path d="M12.4 7.8C15.2 7.6 15.3 10.8 12 11" fill="none" stroke="#d06a42" stroke-width="1.1"/>
<ellipse cx="7.6" cy="7.4" rx="5" ry="1.3" fill="#c96a48"/>
<ellipse cx="7.6" cy="8.8" rx="3" ry="1.2" fill="#f7c0a6" opacity="0.8"/>
<path d="M1.85 0.30H7.90L6.35 6.50H0.30Z" fill="#5f6a70" stroke="#4a5358" stroke-width="0.6" stroke-linejoin="round"/><path d="M3.44 1.66L2.20 5.57" stroke="#f4f4f4" stroke-width="0.84"/><path d="M5.34 1.66L4.10 5.57" stroke="#f4f4f4" stroke-width="0.84"/><path d="M7.24 1.66L6.00 5.57" stroke="#f4f4f4" stroke-width="0.84"/>
</svg>
<div class="t" style="left:145px;top:431.84px;height:20px;line-height:20px;font-size:14.6px;color:#000;font-family:'Liberation Sans', sans-serif;font-weight:400;font-style:normal;">Anahata ASI Website</div>
<div class="t" style="left:400px;width:128px;text-align:right;top:431px;height:20px;line-height:20px;font-size:14.6px;color:#000">0</div>
<svg style="left:109.5px;top:457.5px" width="6" height="10" viewBox="0 0 6 10"><path d="M0.8 0.8L5 5L0.8 9.2" fill="none" stroke="#9a9a9a" stroke-width="1"/></svg>
<svg style="left:125px;top:454px" width="16" height="16" viewBox="0 0 16 16">
<ellipse cx="7.5" cy="12.6" rx="6.6" ry="2.6" fill="#f0a27e" stroke="#d5714a" stroke-width="0.8"/>
<path d="M2.6 7.2H12.6V9.6C12.6 11.6 10.4 12.8 7.6 12.8C4.8 12.8 2.6 11.6 2.6 9.6Z" fill="#ec9570" stroke="#d06a42" stroke-width="0.8"/>
<path d="M12.4 7.8C15.2 7.6 15.3 10.8 12 11" fill="none" stroke="#d06a42" stroke-width="1.1"/>
<ellipse cx="7.6" cy="7.4" rx="5" ry="1.3" fill="#c96a48"/>
<ellipse cx="7.6" cy="8.8" rx="3" ry="1.2" fill="#f7c0a6" opacity="0.8"/>
<path d="M1.85 0.30H7.90L6.35 6.50H0.30Z" fill="#5f6a70" stroke="#4a5358" stroke-width="0.6" stroke-linejoin="round"/><path d="M3.44 1.66L2.20 5.57" stroke="#f4f4f4" stroke-width="0.84"/><path d="M5.34 1.66L4.10 5.57" stroke="#f4f4f4" stroke-width="0.84"/><path d="M7.24 1.66L6.00 5.57" stroke="#f4f4f4" stroke-width="0.84"/>
</svg>
<div class="t" style="left:145px;top:451.84px;height:20px;line-height:20px;font-size:14.6px;color:#000;font-family:'Liberation Sans', sans-serif;font-weight:400;font-style:normal;">Anahata ASI Yam</div>
<div class="t" style="left:400px;width:128px;text-align:right;top:451px;height:20px;line-height:20px;font-size:14.6px;color:#000">0</div>
<svg style="left:109.5px;top:477.5px" width="6" height="10" viewBox="0 0 6 10"><path d="M0.8 0.8L5 5L0.8 9.2" fill="none" stroke="#9a9a9a" stroke-width="1"/></svg>
<svg style="left:125px;top:474px" width="16" height="16" viewBox="0 0 16 16">
<ellipse cx="7.5" cy="12.6" rx="6.6" ry="2.6" fill="#f0a27e" stroke="#d5714a" stroke-width="0.8"/>
<path d="M2.6 7.2H12.6V9.6C12.6 11.6 10.4 12.8 7.6 12.8C4.8 12.8 2.6 11.6 2.6 9.6Z" fill="#ec9570" stroke="#d06a42" stroke-width="0.8"/>
<path d="M12.4 7.8C15.2 7.6 15.3 10.8 12 11" fill="none" stroke="#d06a42" stroke-width="1.1"/>
<ellipse cx="7.6" cy="7.4" rx="5" ry="1.3" fill="#c96a48"/>
<ellipse cx="7.6" cy="8.8" rx="3" ry="1.2" fill="#f7c0a6" opacity="0.8"/>
<path d="M1.85 0.30H7.90L6.35 6.50H0.30Z" fill="#5f6a70" stroke="#4a5358" stroke-width="0.6" stroke-linejoin="round"/><path d="M3.44 1.66L2.20 5.57" stroke="#f4f4f4" stroke-width="0.84"/><path d="M5.34 1.66L4.10 5.57" stroke="#f4f4f4" stroke-width="0.84"/><path d="M7.24 1.66L6.00 5.57" stroke="#f4f4f4" stroke-width="0.84"/>
</svg>
<div class="t" style="left:145px;top:471.84px;height:20px;line-height:20px;font-size:14.6px;color:#000;font-family:'Liberation Sans', sans-serif;font-weight:400;font-style:normal;">Anahata ASI CLI</div>
<div class="t" style="left:400px;width:128px;text-align:right;top:471px;height:20px;line-height:20px;font-size:14.6px;color:#000">0</div>
<svg style="left:109.5px;top:497.5px" width="6" height="10" viewBox="0 0 6 10"><path d="M0.8 0.8L5 5L0.8 9.2" fill="none" stroke="#9a9a9a" stroke-width="1"/></svg>
<svg style="left:125px;top:494px" width="16" height="16" viewBox="0 0 16 16">
<path d="M1 6.5H4.5V5A1.8 1.8 0 0 1 8.1 5V6.5H12V9.2H13.6A1.7 1.7 0 0 1 13.6 12.6H12V15H8.4V13.6A1.8 1.8 0 0 0 4.8 13.6V15H1V11.4H2.5A1.7 1.7 0 0 0 2.5 8H1Z" fill="#8d92c9" stroke="#62679a" stroke-width="0.8"/>
<path d="M1.85 0.30H7.90L6.35 6.50H0.30Z" fill="#5f6a70" stroke="#4a5358" stroke-width="0.6" stroke-linejoin="round"/><path d="M3.44 1.66L2.20 5.57" stroke="#f4f4f4" stroke-width="0.84"/><path d="M5.34 1.66L4.10 5.57" stroke="#f4f4f4" stroke-width="0.84"/><path d="M7.24 1.66L6.00 5.57" stroke="#f4f4f4" stroke-width="0.84"/>
</svg>
<div class="t" style="left:145px;top:491.84px;height:20px;line-height:20px;font-size:14.6px;color:#000;font-family:'Liberation Sans', sans-serif;font-weight:400;font-style:normal;">Anahata ASI NetBeans</div>
<div class="t" style="left:400px;width:128px;text-align:right;top:491px;height:20px;line-height:20px;font-size:14.6px;color:#000">0</div>
<svg style="left:91.5px;top:517.5px" width="6" height="10" viewBox="0 0 6 10"><path d="M0.8 0.8L5 5L0.8 9.2" fill="none" stroke="#9a9a9a" stroke-width="1"/></svg>
<svg style="left:109.2px;top:516px" width="12" height="12" viewBox="0 0 12 12">
<path d="M6 2V10M2 6H10" stroke="#2aa548" stroke-width="1.5"/>
<circle cx="6" cy="1.9" r="1.9" fill="#2aa548"/><circle cx="6" cy="10.1" r="1.9" fill="#2aa548"/>
<circle cx="1.9" cy="6" r="1.9" fill="#2aa548"/><circle cx="10.1" cy="6" r="1.9" fill="#2aa548"/>
</svg>
<div class="t" style="left:127px;top:511.84px;height:20px;line-height:20px;font-size:14.6px;color:#000;font-family:'Liberation Sans', sans-serif;font-weight:400;font-style:normal;">Tools</div>
<div class="t" style="left:400px;width:128px;text-align:right;top:511px;height:20px;line-height:20px;font-size:14.6px;color:#000">0</div>
<svg style="left:73.5px;top:537.5px" width="6" height="10" viewBox="0 0 6 10"><path d="M0.8 0.8L5 5L0.8 9.2" fill="none" stroke="#9a9a9a" stroke-width="1"/></svg>
<svg style="left:89.5px;top:534.5px" width="13.3" height="15.2" viewBox="0 0 14 16">
<path d="M8.2 0.2C4.6 2.4 5.2 4.2 6.6 5.6C7.4 6.4 7.2 7.2 6.6 7.8M9.6 3.2C8.2 4.2 8.6 5 9 5.6C9.3 6.1 9.1 6.8 8.5 7.3" fill="none" stroke="#e0281e" stroke-width="1"/>
<path d="M3.6 9.1Q7 10 10.4 9.1M3.9 11.1Q7 11.9 10.1 11.1M10.6 8.9Q13.4 9.1 11.6 11.3L10.2 12M1 13.3Q7 15.6 13 13.3M3.8 15.1Q7.2 15.9 10.4 15.1" fill="none" stroke="#4a88cc" stroke-width="0.95"/>
</svg>
<div class="t" style="left:109px;top:531.84px;height:20px;line-height:20px;font-size:14.6px;color:#000;font-family:'Liberation Sans', sans-serif;font-weight:400;font-style:normal;">Radio</div>
<div class="t" style="left:400px;width:128px;text-align:right;top:531px;height:20px;line-height:20px;font-size:14.6px;color:#000">0</div>
<svg style="left:73.5px;top:557.5px" width="6" height="10" viewBox="0 0 6 10"><path d="M0.8 0.8L5 5L0.8 9.2" fill="none" stroke="#9a9a9a" stroke-width="1"/></svg>
<svg style="left:89.5px;top:554.5px" width="13.3" height="15.2" viewBox="0 0 14 16">
<path d="M8.2 0.2C4.6 2.4 5.2 4.2 6.6 5.6C7.4 6.4 7.2 7.2 6.6 7.8M9.6 3.2C8.2 4.2 8.6 5 9 5.6C9.3 6.1 9.1 6.8 8.5 7.3" fill="none" stroke="#e0281e" stroke-width="1"/>
<path d="M3.6 9.1Q7 10 10.4 9.1M3.9 11.1Q7 11.9 10.1 11.1M10.6 8.9Q13.4 9.1 11.6 11.3L10.2 12M1 13.3Q7 15.6 13 13.3M3.8 15.1Q7.2 15.9 10.4 15.1" fill="none" stroke="#4a88cc" stroke-width="0.95"/>
</svg>
<div class="t" style="left:109px;top:551.84px;height:20px;line-height:20px;font-size:14.6px;color:#000;font-family:'Liberation Sans', sans-serif;font-weight:400;font-style:normal;">Host</div>
<div class="t" style="left:400px;width:128px;text-align:right;top:551px;height:20px;line-height:20px;font-size:14.6px;color:#000">0</div>
<svg style="left:73.5px;top:577.5px" width="6" height="10" viewBox="0 0 6 10"><path d="M0.8 0.8L5 5L0.8 9.2" fill="none" stroke="#9a9a9a" stroke-width="1"/></svg>
<svg style="left:89.5px;top:574.5px" width="13.3" height="15.2" viewBox="0 0 14 16">
<path d="M8.2 0.2C4.6 2.4 5.2 4.2 6.6 5.6C7.4 6.4 7.2 7.2 6.6 7.8M9.6 3.2C8.2 4.2 8.6 5 9 5.6C9.3 6.1 9.1 6.8 8.5 7.3" fill="none" stroke="#e0281e" stroke-width="1"/>
<path d="M3.6 9.1Q7 10 10.4 9.1M3.9 11.1Q7 11.9 10.1 11.1M10.6 8.9Q13.4 9.1 11.6 11.3L10.2 12M1 13.3Q7 15.6 13 13.3M3.8 15.1Q7.2 15.9 10.4 15.1" fill="none" stroke="#4a88cc" stroke-width="0.95"/>
</svg>
<div class="t" style="left:109px;top:571.84px;height:20px;line-height:20px;font-size:14.6px;color:#000;font-family:'Liberation Sans', sans-serif;font-weight:400;font-style:normal;">IDE</div>
<div class="t" style="left:400px;width:128px;text-align:right;top:571px;height:20px;line-height:20px;font-size:14.6px;color:#000">0</div>
<svg style="left:73.5px;top:597.5px" width="6" height="10" viewBox="0 0 6 10"><path d="M0.8 0.8L5 5L0.8 9.2" fill="none" stroke="#9a9a9a" stroke-width="1"/></svg>
<svg style="left:89.5px;top:594.5px" width="13.3" height="15.2" viewBox="0 0 14 16">
<path d="M8.2 0.2C4.6 2.4 5.2 4.2 6.6 5.6C7.4 6.4 7.2 7.2 6.6 7.8M9.6 3.2C8.2 4.2 8.6 5 9 5.6C9.3 6.1 9.1 6.8 8.5 7.3" fill="none" stroke="#e0281e" stroke-width="1"/>
<path d="M3.6 9.1Q7 10 10.4 9.1M3.9 11.1Q7 11.9 10.1 11.1M10.6 8.9Q13.4 9.1 11.6 11.3L10.2 12M1 13.3Q7 15.6 13 13.3M3.8 15.1Q7.2 15.9 10.4 15.1" fill="none" stroke="#4a88cc" stroke-width="0.95"/>
</svg>
<div class="t" style="left:109px;top:591.84px;height:20px;line-height:20px;font-size:14.6px;color:#000;font-family:'Liberation Sans', sans-serif;font-weight:400;font-style:normal;">Refactor</div>
<div class="t" style="left:400px;width:128px;text-align:right;top:591px;height:20px;line-height:20px;font-size:14.6px;color:#000">0</div>
<svg style="left:73.5px;top:617.5px" width="6" height="10" viewBox="0 0 6 10"><path d="M0.8 0.8L5 5L0.8 9.2" fill="none" stroke="#9a9a9a" stroke-width="1"/></svg>
<svg style="left:89.5px;top:614.5px" width="13.3" height="15.2" viewBox="0 0 14 16">
<path d="M8.2 0.2C4.6 2.4 5.2 4.2 6.6 5.6C7.4 6.4 7.2 7.2 6.6 7.8M9.6 3.2C8.2 4.2 8.6 5 9 5.6C9.3 6.1 9.1 6.8 8.5 7.3" fill="none" stroke="#e0281e" stroke-width="1"/>
<path d="M3.6 9.1Q7 10 10.4 9.1M3.9 11.1Q7 11.9 10.1 11.1M10.6 8.9Q13.4 9.1 11.6 11.3L10.2 12M1 13.3Q7 15.6 13 13.3M3.8 15.1Q7.2 15.9 10.4 15.1" fill="none" stroke="#4a88cc" stroke-width="0.95"/>
</svg>
<div class="t" style="left:109px;top:611.84px;height:20px;line-height:20px;font-size:14.6px;color:#000;font-family:'Liberation Sans', sans-serif;font-weight:400;font-style:normal;">History</div>
<div class="t" style="left:400px;width:128px;text-align:right;top:611px;height:20px;line-height:20px;font-size:14.6px;color:#000">1,370</div>
<svg style="left:73.5px;top:637.5px" width="6" height="10" viewBox="0 0 6 10"><path d="M0.8 0.8L5 5L0.8 9.2" fill="none" stroke="#9a9a9a" stroke-width="1"/></svg>
<svg style="left:89.5px;top:634.5px" width="13.3" height="15.2" viewBox="0 0 14 16">
<path d="M8.2 0.2C4.6 2.4 5.2 4.2 6.6 5.6C7.4 6.4 7.2 7.2 6.6 7.8M9.6 3.2C8.2 4.2 8.6 5 9 5.6C9.3 6.1 9.1 6.8 8.5 7.3" fill="none" stroke="#e0281e" stroke-width="1"/>
<path d="M3.6 9.1Q7 10 10.4 9.1M3.9 11.1Q7 11.9 10.1 11.1M10.6 8.9Q13.4 9.1 11.6 11.3L10.2 12M1 13.3Q7 15.6 13 13.3M3.8 15.1Q7.2 15.9 10.4 15.1" fill="none" stroke="#4a88cc" stroke-width="0.95"/>
</svg>
<div class="t" style="left:109px;top:631.84px;height:20px;line-height:20px;font-size:14.6px;color:#000;font-family:'Liberation Sans', sans-serif;font-weight:400;font-style:normal;">Screens</div>
<div class="t" style="left:400px;width:128px;text-align:right;top:631px;height:20px;line-height:20px;font-size:14.6px;color:#000">0</div>
<svg style="left:73.5px;top:657.5px" width="6" height="10" viewBox="0 0 6 10"><path d="M0.8 0.8L5 5L0.8 9.2" fill="none" stroke="#9a9a9a" stroke-width="1"/></svg>
<svg style="left:89.5px;top:654.5px" width="13.3" height="15.2" viewBox="0 0 14 16">
<path d="M8.2 0.2C4.6 2.4 5.2 4.2 6.6 5.6C7.4 6.4 7.2 7.2 6.6 7.8M9.6 3.2C8.2 4.2 8.6 5 9 5.6C9.3 6.1 9.1 6.8 8.5 7.3" fill="none" stroke="#e0281e" stroke-width="1"/>
<path d="M3.6 9.1Q7 10 10.4 9.1M3.9 11.1Q7 11.9 10.1 11.1M10.6 8.9Q13.4 9.1 11.6 11.3L10.2 12M1 13.3Q7 15.6 13 13.3M3.8 15.1Q7.2 15.9 10.4 15.1" fill="none" stroke="#4a88cc" stroke-width="0.95"/>
</svg>
<div class="t" style="left:109px;top:651.84px;height:20px;line-height:20px;font-size:14.6px;color:#000;font-family:'Liberation Sans', sans-serif;font-weight:400;font-style:normal;">Shell</div>
<div class="t" style="left:400px;width:128px;text-align:right;top:651px;height:20px;line-height:20px;font-size:14.6px;color:#000">1,126</div>
<svg style="left:73.5px;top:677.5px" width="6" height="10" viewBox="0 0 6 10"><path d="M0.8 0.8L5 5L0.8 9.2" fill="none" stroke="#9a9a9a" stroke-width="1"/></svg>
<svg style="left:89.5px;top:674.5px" width="13.3" height="15.2" viewBox="0 0 14 16">
<path d="M8.2 0.2C4.6 2.4 5.2 4.2 6.6 5.6C7.4 6.4 7.2 7.2 6.6 7.8M9.6 3.2C8.2 4.2 8.6 5 9 5.6C9.3 6.1 9.1 6.8 8.5 7.3" fill="none" stroke="#e0281e" stroke-width="1"/>
<path d="M3.6 9.1Q7 10 10.4 9.1M3.9 11.1Q7 11.9 10.1 11.1M10.6 8.9Q13.4 9.1 11.6 11.3L10.2 12M1 13.3Q7 15.6 13 13.3M3.8 15.1Q7.2 15.9 10.4 15.1" fill="none" stroke="#4a88cc" stroke-width="0.95"/>
</svg>
<div class="t" style="left:109px;top:671.84px;height:20px;line-height:20px;font-size:14.6px;color:#000;font-family:'Liberation Sans', sans-serif;font-weight:400;font-style:normal;">NbJava</div>
<div class="t" style="left:400px;width:128px;text-align:right;top:671px;height:20px;line-height:20px;font-size:14.6px;color:#000">2,229</div>
<svg style="left:73.5px;top:697.5px" width="6" height="10" viewBox="0 0 6 10"><path d="M0.8 0.8L5 5L0.8 9.2" fill="none" stroke="#9a9a9a" stroke-width="1"/></svg>
<svg style="left:89.5px;top:694.5px" width="13.3" height="15.2" viewBox="0 0 14 16">
<path d="M8.2 0.2C4.6 2.4 5.2 4.2 6.6 5.6C7.4 6.4 7.2 7.2 6.6 7.8M9.6 3.2C8.2 4.2 8.6 5 9 5.6C9.3 6.1 9.1 6.8 8.5 7.3" fill="none" stroke="#e0281e" stroke-width="1"/>
<path d="M3.6 9.1Q7 10 10.4 9.1M3.9 11.1Q7 11.9 10.1 11.1M10.6 8.9Q13.4 9.1 11.6 11.3L10.2 12M1 13.3Q7 15.6 13 13.3M3.8 15.1Q7.2 15.9 10.4 15.1" fill="none" stroke="#4a88cc" stroke-width="0.95"/>
</svg>
<div class="t" style="left:109px;top:691.84px;height:20px;line-height:20px;font-size:14.6px;color:#000;font-family:'Liberation Sans', sans-serif;font-weight:400;font-style:normal;">Speech</div>
<div class="t" style="left:400px;width:128px;text-align:right;top:691px;height:20px;line-height:20px;font-size:14.6px;color:#000">0</div>
<svg style="left:73.5px;top:717.5px" width="6" height="10" viewBox="0 0 6 10"><path d="M0.8 0.8L5 5L0.8 9.2" fill="none" stroke="#9a9a9a" stroke-width="1"/></svg>
<svg style="left:89.5px;top:714.5px" width="13.3" height="15.2" viewBox="0 0 14 16">
<path d="M8.2 0.2C4.6 2.4 5.2 4.2 6.6 5.6C7.4 6.4 7.2 7.2 6.6 7.8M9.6 3.2C8.2 4.2 8.6 5 9 5.6C9.3 6.1 9.1 6.8 8.5 7.3" fill="none" stroke="#bdbdbd" stroke-width="1"/>
<path d="M3.6 9.1Q7 10 10.4 9.1M3.9 11.1Q7 11.9 10.1 11.1M10.6 8.9Q13.4 9.1 11.6 11.3L10.2 12M1 13.3Q7 15.6 13 13.3M3.8 15.1Q7.2 15.9 10.4 15.1" fill="none" stroke="#bdbdbd" stroke-width="0.95"/>
</svg>
<div class="t" style="left:109px;top:711.84px;height:20px;line-height:20px;font-size:14.6px;color:#8c8c8c;font-family:'Liberation Sans', sans-serif;font-weight:400;font-style:normal;">Chrome</div>
<div class="t" style="left:400px;width:128px;text-align:right;top:711px;height:20px;line-height:20px;font-size:14.6px;color:#000">182</div>
<svg style="left:73.5px;top:737.5px" width="6" height="10" viewBox="0 0 6 10"><path d="M0.8 0.8L5 5L0.8 9.2" fill="none" stroke="#9a9a9a" stroke-width="1"/></svg>
<svg style="left:89.5px;top:734.5px" width="13.3" height="15.2" viewBox="0 0 14 16">
<path d="M8.2 0.2C4.6 2.4 5.2 4.2 6.6 5.6C7.4 6.4 7.2 7.2 6.6 7.8M9.6 3.2C8.2 4.2 8.6 5 9 5.6C9.3 6.1 9.1 6.8 8.5 7.3" fill="none" stroke="#e0281e" stroke-width="1"/>
<path d="M3.6 9.1Q7 10 10.4 9.1M3.9 11.1Q7 11.9 10.1 11.1M10.6 8.9Q13.4 9.1 11.6 11.3L10.2 12M1 13.3Q7 15.6 13 13.3M3.8 15.1Q7.2 15.9 10.4 15.1" fill="none" stroke="#4a88cc" stroke-width="0.95"/>
</svg>
<div class="t" style="left:109px;top:731.84px;height:20px;line-height:20px;font-size:14.6px;color:#000;font-family:'Liberation Sans', sans-serif;font-weight:400;font-style:normal;">CodeModel</div>
<div class="t" style="left:400px;width:128px;text-align:right;top:731px;height:20px;line-height:20px;font-size:14.6px;color:#000">277</div>
<svg style="left:73.5px;top:757.5px" width="6" height="10" viewBox="0 0 6 10"><path d="M0.8 0.8L5 5L0.8 9.2" fill="none" stroke="#9a9a9a" stroke-width="1"/></svg>
<svg style="left:89.5px;top:754.5px" width="13.3" height="15.2" viewBox="0 0 14 16">
<path d="M8.2 0.2C4.6 2.4 5.2 4.2 6.6 5.6C7.4 6.4 7.2 7.2 6.6 7.8M9.6 3.2C8.2 4.2 8.6 5 9 5.6C9.3 6.1 9.1 6.8 8.5 7.3" fill="none" stroke="#e0281e" stroke-width="1"/>
<path d="M3.6 9.1Q7 10 10.4 9.1M3.9 11.1Q7 11.9 10.1 11.1M10.6 8.9Q13.4 9.1 11.6 11.3L10.2 12M1 13.3Q7 15.6 13 13.3M3.8 15.1Q7.2 15.9 10.4 15.1" fill="none" stroke="#4a88cc" stroke-width="0.95"/>
</svg>
<div class="t" style="left:109px;top:751.84px;height:20px;line-height:20px;font-size:14.6px;color:#000;font-family:'Liberation Sans', sans-serif;font-weight:400;font-style:normal;">Resources</div>
<div class="t" style="left:400px;width:128px;text-align:right;top:751px;height:20px;line-height:20px;font-size:14.6px;color:#000">635</div>
<svg style="left:73.5px;top:777.5px" width="6" height="10" viewBox="0 0 6 10"><path d="M0.8 0.8L5 5L0.8 9.2" fill="none" stroke="#9a9a9a" stroke-width="1"/></svg>
<svg style="left:89.5px;top:774.5px" width="13.3" height="15.2" viewBox="0 0 14 16">
<path d="M8.2 0.2C4.6 2.4 5.2 4.2 6.6 5.6C7.4 6.4 7.2 7.2 6.6 7.8M9.6 3.2C8.2 4.2 8.6 5 9 5.6C9.3 6.1 9.1 6.8 8.5 7.3" fill="none" stroke="#e0281e" stroke-width="1"/>
<path d="M3.6 9.1Q7 10 10.4 9.1M3.9 11.1Q7 11.9 10.1 11.1M10.6 8.9Q13.4 9.1 11.6 11.3L10.2 12M1 13.3Q7 15.6 13 13.3M3.8 15.1Q7.2 15.9 10.4 15.1" fill="none" stroke="#4a88cc" stroke-width="0.95"/>
</svg>
<div class="t" style="left:109px;top:771.84px;height:20px;line-height:20px;font-size:14.6px;color:#000;font-family:'Liberation Sans', sans-serif;font-weight:400;font-style:normal;">Audio</div>
<div class="t" style="left:400px;width:128px;text-align:right;top:771px;height:20px;line-height:20px;font-size:14.6px;color:#000">0</div>
<svg style="left:73.5px;top:797.5px" width="6" height="10" viewBox="0 0 6 10"><path d="M0.8 0.8L5 5L0.8 9.2" fill="none" stroke="#9a9a9a" stroke-width="1"/></svg>
<svg style="left:89.5px;top:794.5px" width="13.3" height="15.2" viewBox="0 0 14 16">
<path d="M8.2 0.2C4.6 2.4 5.2 4.2 6.6 5.6C7.4 6.4 7.2 7.2 6.6 7.8M9.6 3.2C8.2 4.2 8.6 5 9 5.6C9.3 6.1 9.1 6.8 8.5 7.3" fill="none" stroke="#e0281e" stroke-width="1"/>
<path d="M3.6 9.1Q7 10 10.4 9.1M3.9 11.1Q7 11.9 10.1 11.1M10.6 8.9Q13.4 9.1 11.6 11.3L10.2 12M1 13.3Q7 15.6 13 13.3M3.8 15.1Q7.2 15.9 10.4 15.1" fill="none" stroke="#4a88cc" stroke-width="0.95"/>
</svg>
<div class="t" style="left:109px;top:791.84px;height:20px;line-height:20px;font-size:14.6px;color:#000;font-family:'Liberation Sans', sans-serif;font-weight:400;font-style:normal;">Editor</div>
<div class="t" style="left:400px;width:128px;text-align:right;top:791px;height:20px;line-height:20px;font-size:14.6px;color:#000">0</div>
<svg style="left:73.5px;top:817.5px" width="6" height="10" viewBox="0 0 6 10"><path d="M0.8 0.8L5 5L0.8 9.2" fill="none" stroke="#9a9a9a" stroke-width="1"/></svg>
<svg style="left:89.5px;top:814.5px" width="13.3" height="15.2" viewBox="0 0 14 16">
<path d="M8.2 0.2C4.6 2.4 5.2 4.2 6.6 5.6C7.4 6.4 7.2 7.2 6.6 7.8M9.6 3.2C8.2 4.2 8.6 5 9 5.6C9.3 6.1 9.1 6.8 8.5 7.3" fill="none" stroke="#e0281e" stroke-width="1"/>
<path d="M3.6 9.1Q7 10 10.4 9.1M3.9 11.1Q7 11.9 10.1 11.1M10.6 8.9Q13.4 9.1 11.6 11.3L10.2 12M1 13.3Q7 15.6 13 13.3M3.8 15.1Q7.2 15.9 10.4 15.1" fill="none" stroke="#4a88cc" stroke-width="0.95"/>
</svg>
<div class="t" style="left:109px;top:811.84px;height:20px;line-height:20px;font-size:14.6px;color:#000;font-family:'Liberation Sans', sans-serif;font-weight:400;font-style:normal;">Session</div>
<div class="t" style="left:400px;width:128px;text-align:right;top:811px;height:20px;line-height:20px;font-size:14.6px;color:#000">0</div>
<svg style="left:55.5px;top:837.5px" width="6" height="10" viewBox="0 0 6 10"><path d="M0.8 0.8L5 5L0.8 9.2" fill="none" stroke="#9a9a9a" stroke-width="1"/></svg>
<svg style="left:72.5px;top:835.5px" width="13" height="13" viewBox="0 0 13 13"><path d="M6.5 0.3L12.7 6.5L6.5 12.7L0.3 6.5Z" fill="#f7951d"/></svg>
<div class="t" style="left:91px;top:831.84px;height:20px;line-height:20px;font-size:14.6px;color:#000;font-family:'Liberation Sans', sans-serif;font-weight:400;font-style:normal;">Resources (V2)</div>
<div class="t" style="left:400px;width:128px;text-align:right;top:831px;height:20px;line-height:20px;font-size:14.6px;color:#000">5,690</div>
<svg style="left:55.5px;top:857.5px" width="6" height="10" viewBox="0 0 6 10"><path d="M0.8 0.8L5 5L0.8 9.2" fill="none" stroke="#9a9a9a" stroke-width="1"/></svg>
<svg style="left:73px;top:856px" width="14" height="14" viewBox="0 0 14 14"><path d="M0.5 8H3.5L6 1.5L8 12.5L10 6.5H13.5" fill="none" stroke="#2a5aa8" stroke-width="1.4"/></svg>
<div class="t" style="left:91px;top:851.84px;height:20px;line-height:20px;font-size:14.6px;color:#000;font-family:'Liberation Sans', sans-serif;font-weight:400;font-style:normal;">History</div>
<div class="t" style="left:400px;width:128px;text-align:right;top:851px;height:20px;line-height:20px;font-size:14.6px;color:#000">0</div>
<div class="b" style="left:53px;top:903px;width:268px;height:8px;background:#c8c8c8;border-radius:4px"></div>
<div class="b" style="left:548px;top:146px;width:1px;height:763px;background:#f4f1f4"></div>
<div class="b" style="left:549px;top:146px;width:1px;height:763px;background:#94cc94"></div>
<div class="b" style="left:550px;top:146px;width:1259px;height:763px;background:#eaf9eb"></div>
<div class="b" style="left:1809px;top:146px;width:1px;height:763px;background:#94cc94"></div>
<div class="b" style="left:562px;top:146px;width:1px;height:763px;background:#e1e9e1"></div>
<div class="b" style="left:1796px;top:146px;width:1px;height:763px;background:#dfe3df"></div>
<div class="b" style="left:563px;top:146px;width:1233px;height:18px;background:linear-gradient(90deg,#e3ebe2 0%,#dee6dd 30%,#dbe3da 62%,#e9f6e9 100%)"></div>
<div class="b" style="left:1810px;top:146px;width:12px;height:763px;background:#f2f2f2"></div>
<div class="b" style="left:1816px;top:177px;width:10px;height:103px;background:#c9c9c9;border-radius:5px"></div>
<div class="b" style="left:564px;top:140px;width:20px;height:20px;border:1px solid #c6c6c6;background:#fff;border-radius:3px"></div>
<div class="b" style="left:550px;top:140px;width:1259px;height:6px;background:#f2f2f2"></div>
<svg style="left:568px;top:146px" width="14" height="14" viewBox="0 0 14 14">
<rect x="0.7" y="0.7" width="8" height="7.6" rx="1.2" fill="none" stroke="#4f86c6" stroke-width="1.4"/>
<rect x="4.9" y="4.9" width="7.8" height="7.8" rx="1" fill="#f6dc4a" stroke="#d0508a" stroke-width="1.6"/>
<circle cx="8.8" cy="8.8" r="0.7" fill="#fff"/>
</svg>
<div class="t" style="left:597px;top:144.15px;height:16px;line-height:16px;font-size:11.1px;color:#9c9c9c;font-family:'Liberation Sans', sans-serif;font-weight:400;font-style:normal;">## Project Struc *(...10315 more chars...)* - `2` (CLASS) \n - 16:48:16</div>
<div class="t" style="left:1700px;width:91px;text-align:right;top:143px;height:18px;line-height:18px;font-size:11px;color:#a4a4a4;font-style:italic">(109)</div>
<div class="t" style="left:577px;top:175.78px;height:27px;line-height:27px;font-size:19.4px;color:#000;font-family:'Liberation Sans', sans-serif;font-weight:700;font-style:normal;">Project Structure: Anahata ASI Core</div>
<div class="t" style="left:577px;top:217.30px;height:21px;line-height:21px;font-size:15px;color:#000;font-family:'Liberation Sans', sans-serif;font-weight:700;font-style:normal;">Root Directory</div>
<div class="t" style="left:577px;top:249.67px;height:18px;line-height:18px;font-size:12.5px;color:#000;font-family:'Liberation Mono', monospace;font-weight:400;font-style:normal;letter-spacing:-0.5px;">- Folders: `target`, `src`</div>
<div class="t" style="left:577px;top:262.67px;height:18px;line-height:18px;font-size:12.5px;color:#000;font-family:'Liberation Mono', monospace;font-weight:400;font-style:normal;letter-spacing:-0.5px;">- <span style="display:inline-block;width:11.5px;height:9px;position:relative;vertical-align:baseline"><svg style="left:3px;top:0px" width="7" height="9" viewBox="0 0 7 9"><path d="M0.5 0.5H5L6.5 2V8.5H0.5Z" fill="none" stroke="#222" stroke-width="0.9"/><path d="M2 4H5M2 6H5M1.8 0.5V3H5" stroke="#444" stroke-width="0.6" fill="none"/></svg></span> `anahata.md`  (3) [3.3 KB]</div>
<div class="t" style="left:577px;top:275.67px;height:18px;line-height:18px;font-size:12.5px;color:#000;font-family:'Liberation Mono', monospace;font-weight:400;font-style:normal;letter-spacing:-0.5px;">- <span style="display:inline-block;width:11.5px;height:9px;position:relative;vertical-align:baseline"><svg style="left:3px;top:0px" width="7" height="9" viewBox="0 0 7 9"><path d="M0.5 0.5H5L6.5 2V8.5H0.5Z" fill="none" stroke="#222" stroke-width="0.9"/><path d="M2 4H5M2 6H5M1.8 0.5V3H5" stroke="#444" stroke-width="0.6" fill="none"/></svg></span> `resources.md`  [2.9 KB]</div>
<div class="t" style="left:577px;top:288.67px;height:18px;line-height:18px;font-size:12.5px;color:#000;font-family:'Liberation Mono', monospace;font-weight:400;font-style:normal;letter-spacing:-0.5px;">- <span style="display:inline-block;width:11.5px;height:9px;position:relative;vertical-align:baseline"><svg style="left:3px;top:0px" width="7" height="9" viewBox="0 0 7 9"><path d="M0.5 0.5H5L6.5 2V8.5H0.5Z" fill="none" stroke="#222" stroke-width="0.9"/><path d="M2 4H5M2 6H5M1.8 0.5V3H5" stroke="#444" stroke-width="0.6" fill="none"/></svg></span> `pom.xml`  [4.1 KB]</div>
<div class="t" style="left:577px;top:301.67px;height:18px;line-height:18px;font-size:12.5px;color:#000;font-family:'Liberation Mono', monospace;font-weight:400;font-style:normal;letter-spacing:-0.5px;">- <span style="display:inline-block;width:11.5px;height:9px;position:relative;vertical-align:baseline"><svg style="left:3px;top:0px" width="7" height="9" viewBox="0 0 7 9"><path d="M0.5 0.5H5L6.5 2V8.5H0.5Z" fill="none" stroke="#222" stroke-width="0.9"/><path d="M2 4H5M2 6H5M1.8 0.5V3H5" stroke="#444" stroke-width="0.6" fill="none"/></svg></span> `tools.md`  [6.1 KB]</div>
<div class="t" style="left:577px;top:314.67px;height:18px;line-height:18px;font-size:12.5px;color:#000;font-family:'Liberation Mono', monospace;font-weight:400;font-style:normal;letter-spacing:-0.5px;">- <span style="display:inline-block;width:11.5px;height:9px;position:relative;vertical-align:baseline"><svg style="left:3px;top:0px" width="7" height="9" viewBox="0 0 7 9"><path d="M0.5 0.5H5L6.5 2V8.5H0.5Z" fill="none" stroke="#222" stroke-width="0.9"/><path d="M2 4H5M2 6H5M1.8 0.5V3H5" stroke="#444" stroke-width="0.6" fill="none"/></svg></span> `java2json2schema.md`  [2.7 KB]</div>
<div class="t" style="left:577px;top:327.67px;height:18px;line-height:18px;font-size:12.5px;color:#000;font-family:'Liberation Mono', monospace;font-weight:400;font-style:normal;letter-spacing:-0.5px;">- <span style="display:inline-block;width:11.5px;height:9px;position:relative;vertical-align:baseline"><svg style="left:3px;top:0px" width="7" height="9" viewBox="0 0 7 9"><path d="M0.5 0.5H5L6.5 2V8.5H0.5Z" fill="none" stroke="#222" stroke-width="0.9"/><path d="M2 4H5M2 6H5M1.8 0.5V3H5" stroke="#444" stroke-width="0.6" fill="none"/></svg></span> `metadata.md`  [3.0 KB]</div>
<div class="t" style="left:577px;top:340.67px;height:18px;line-height:18px;font-size:12.5px;color:#000;font-family:'Liberation Mono', monospace;font-weight:400;font-style:normal;letter-spacing:-0.5px;">- <span style="display:inline-block;width:11.5px;height:9px;position:relative;vertical-align:baseline"><svg style="left:3px;top:0px" width="7" height="9" viewBox="0 0 7 9"><path d="M0.5 0.5H5L6.5 2V8.5H0.5Z" fill="none" stroke="#222" stroke-width="0.9"/><path d="M2 4H5M2 6H5M1.8 0.5V3H5" stroke="#444" stroke-width="0.6" fill="none"/></svg></span> `nb-configuration.xml`  [1016 B]</div>
<div class="t" style="left:577px;top:353.67px;height:18px;line-height:18px;font-size:12.5px;color:#000;font-family:'Liberation Mono', monospace;font-weight:400;font-style:normal;letter-spacing:-0.5px;">- <span style="display:inline-block;width:11.5px;height:9px;position:relative;vertical-align:baseline"><svg style="left:3px;top:0px" width="7" height="9" viewBox="0 0 7 9"><path d="M0.5 0.5H5L6.5 2V8.5H0.5Z" fill="none" stroke="#222" stroke-width="0.9"/><path d="M2 4H5M2 6H5M1.8 0.5V3H5" stroke="#444" stroke-width="0.6" fill="none"/></svg></span> `tasks.md`  [1.1 KB]</div>
<div class="t" style="left:577px;top:366.67px;height:18px;line-height:18px;font-size:12.5px;color:#000;font-family:'Liberation Mono', monospace;font-weight:400;font-style:normal;letter-spacing:-0.5px;">- <span style="display:inline-block;width:11.5px;height:9px;position:relative;vertical-align:baseline"><svg style="left:3px;top:0px" width="7" height="9" viewBox="0 0 7 9"><path d="M0.5 0.5H5L6.5 2V8.5H0.5Z" fill="none" stroke="#222" stroke-width="0.9"/><path d="M2 4H5M2 6H5M1.8 0.5V3H5" stroke="#444" stroke-width="0.6" fill="none"/></svg></span> `contextproviders.md`  [2.3 KB]</div>
<div class="t" style="left:577px;top:394.2px;height:21px;line-height:21px;font-size:15px;font-weight:700;color:#000">Source Packages (<span style="font-family:'Liberation Mono',monospace;font-size:12.5px;letter-spacing:-0.5px">src/main/java</span>)</div>
<div class="b" style="left:617px;top:441.5px;width:5px;height:5px;border-radius:50%;background:#000"></div>
<svg style="left:628px;top:435px" width="16" height="16" viewBox="0 0 16 16">
<path d="M0.8 4.5L8.8 1L15 3.8V12L6.8 15.5L0.8 12Z" fill="none" stroke="#2a2a2a" stroke-width="0.85"/>
<path d="M0.8 4.5L6.8 7.5L15 3.8M6.8 7.5V15.5M3.6 3.2L10.8 6.4V8.8" fill="none" stroke="#2a2a2a" stroke-width="0.85"/>
</svg>
<div class="t" style="left:648px;top:436.30px;height:17px;line-height:17px;font-size:12.0px;color:#000;font-family:'Liberation Mono', monospace;font-weight:400;font-style:normal;letter-spacing:-0.2px;">uno.anahata.asi</div>
<div class="b" style="left:642px;top:468.5px;width:6px;height:6px;border-radius:50%;border:1px solid #000"></div>
<svg style="left:655.5px;top:464px" width="8" height="11" viewBox="0 0 8 11">
<path d="M0.5 0.5H6L7.5 2V10.5H0.5Z" fill="none" stroke="#222" stroke-width="0.9"/>
<path d="M2.2 4.5H5.5M2.2 6.5H5.5M2.2 8.5H5.5M2 0.5V3.2H6" stroke="#444" stroke-width="0.6" fill="none"/>
</svg>
<div class="t" style="left:671.5px;top:458.41px;height:21px;line-height:21px;font-size:14.7px;color:#000;font-family:'Liberation Sans', sans-serif;font-weight:400;font-style:normal;"><span style="font-family:'Liberation Mono',monospace;font-size:12.0px;letter-spacing:-0.2px">package-info</span> (PACKAGE) [261 B]</div>
<div class="b" style="left:642px;top:485.6px;width:6px;height:6px;border-radius:50%;border:1px solid #000"></div>
<svg style="left:655.5px;top:481px" width="8" height="11" viewBox="0 0 8 11">
<path d="M0.5 0.5H6L7.5 2V10.5H0.5Z" fill="none" stroke="#222" stroke-width="0.9"/>
<path d="M2.2 4.5H5.5M2.2 6.5H5.5M2.2 8.5H5.5M2 0.5V3.2H6" stroke="#444" stroke-width="0.6" fill="none"/>
</svg>
<div class="t" style="left:671.5px;top:475.51px;height:21px;line-height:21px;font-size:14.7px;color:#000;font-family:'Liberation Sans', sans-serif;font-weight:400;font-style:normal;"><span style="font-family:'Liberation Mono',monospace;font-size:12.0px;letter-spacing:-0.2px">AiExecutors</span> (CLASS) [2.1 KB]</div>
<div class="b" style="left:642px;top:502.7px;width:6px;height:6px;border-radius:50%;border:1px solid #000"></div>
<svg style="left:655.5px;top:498px" width="8" height="11" viewBox="0 0 8 11">
<path d="M0.5 0.5H6L7.5 2V10.5H0.5Z" fill="none" stroke="#222" stroke-width="0.9"/>
<path d="M2.2 4.5H5.5M2.2 6.5H5.5M2.2 8.5H5.5M2 0.5V3.2H6" stroke="#444" stroke-width="0.6" fill="none"/>
</svg>
<div class="t" style="left:671.5px;top:492.61px;height:21px;line-height:21px;font-size:14.7px;color:#000;font-family:'Liberation Sans', sans-serif;font-weight:400;font-style:normal;"><span style="font-family:'Liberation Mono',monospace;font-size:12.0px;letter-spacing:-0.2px">AsiContainer</span> (CLASS) [17.4 KB]</div>
<div class="b" style="left:642px;top:519.8px;width:6px;height:6px;border-radius:50%;border:1px solid #000"></div>
<svg style="left:655.5px;top:515px" width="8" height="11" viewBox="0 0 8 11">
<path d="M0.5 0.5H6L7.5 2V10.5H0.5Z" fill="none" stroke="#222" stroke-width="0.9"/>
<path d="M2.2 4.5H5.5M2.2 6.5H5.5M2.2 8.5H5.5M2 0.5V3.2H6" stroke="#444" stroke-width="0.6" fill="none"/>
</svg>
<div class="t" style="left:671.5px;top:509.71px;height:21px;line-height:21px;font-size:14.7px;color:#000;font-family:'Liberation Sans', sans-serif;font-weight:400;font-style:normal;"><span style="font-family:'Liberation Mono',monospace;font-size:12.0px;letter-spacing:-0.2px">AsiContainerPreferences</span> (CLASS) [3.9 KB]</div>
<div class="b" style="left:617px;top:546.0px;width:5px;height:5px;border-radius:50%;background:#000"></div>
<svg style="left:628px;top:540px" width="16" height="16" viewBox="0 0 16 16">
<path d="M0.8 4.5L8.8 1L15 3.8V12L6.8 15.5L0.8 12Z" fill="none" stroke="#2a2a2a" stroke-width="0.85"/>
<path d="M0.8 4.5L6.8 7.5L15 3.8M6.8 7.5V15.5M3.6 3.2L10.8 6.4V8.8" fill="none" stroke="#2a2a2a" stroke-width="0.85"/>
</svg>
<div class="t" style="left:648px;top:540.80px;height:17px;line-height:17px;font-size:12.0px;color:#000;font-family:'Liberation Mono', monospace;font-weight:400;font-style:normal;letter-spacing:-0.2px;">uno.anahata.asi.agi</div>
<div class="b" style="left:642px;top:574.2px;width:6px;height:6px;border-radius:50%;border:1px solid #000"></div>
<svg style="left:655.5px;top:569px" width="8" height="11" viewBox="0 0 8 11">
<path d="M0.5 0.5H6L7.5 2V10.5H0.5Z" fill="none" stroke="#222" stroke-width="0.9"/>
<path d="M2.2 4.5H5.5M2.2 6.5H5.5M2.2 8.5H5.5M2 0.5V3.2H6" stroke="#444" stroke-width="0.6" fill="none"/>
</svg>
<div class="t" style="left:671.5px;top:564.11px;height:21px;line-height:21px;font-size:14.7px;color:#000;font-family:'Liberation Sans', sans-serif;font-weight:400;font-style:normal;"><span style="font-family:'Liberation Mono',monospace;font-size:12.0px;letter-spacing:-0.2px">package-info</span> (PACKAGE) [282 B]</div>
<div class="b" style="left:642px;top:591.0px;width:6px;height:6px;border-radius:50%;border:1px solid #000"></div>
<svg style="left:655.5px;top:586px" width="8" height="11" viewBox="0 0 8 11">
<path d="M0.5 0.5H6L7.5 2V10.5H0.5Z" fill="none" stroke="#222" stroke-width="0.9"/>
<path d="M2.2 4.5H5.5M2.2 6.5H5.5M2.2 8.5H5.5M2 0.5V3.2H6" stroke="#444" stroke-width="0.6" fill="none"/>
</svg>
<div class="t" style="left:671.5px;top:580.91px;height:21px;line-height:21px;font-size:14.7px;color:#000;font-family:'Liberation Sans', sans-serif;font-weight:400;font-style:normal;"><span style="font-family:'Liberation Mono',monospace;font-size:12.0px;letter-spacing:-0.2px">Agi</span> (CLASS) [33.0 KB]</div>
<div class="b" style="left:667px;top:617.9px;width:6px;height:6px;border:1px solid #000"></div>
<div class="t" style="left:677px;top:607.81px;height:21px;line-height:21px;font-size:14.7px;color:#000;font-family:'Liberation Sans', sans-serif;font-weight:400;font-style:normal;"><span style="font-family:'Liberation Mono',monospace;font-size:12.0px;letter-spacing:-0.2px">1</span> (CLASS)</div>
<div class="b" style="left:667px;top:635.2px;width:6px;height:6px;border:1px solid #000"></div>
<div class="t" style="left:677px;top:625.11px;height:21px;line-height:21px;font-size:14.7px;color:#000;font-family:'Liberation Sans', sans-serif;font-weight:400;font-style:normal;"><span style="font-family:'Liberation Mono',monospace;font-size:12.0px;letter-spacing:-0.2px">Agi</span> (CLASS)</div>
<div class="b" style="left:642px;top:662.5px;width:6px;height:6px;border-radius:50%;border:1px solid #000"></div>
<svg style="left:655.5px;top:658px" width="8" height="11" viewBox="0 0 8 11">
<path d="M0.5 0.5H6L7.5 2V10.5H0.5Z" fill="none" stroke="#222" stroke-width="0.9"/>
<path d="M2.2 4.5H5.5M2.2 6.5H5.5M2.2 8.5H5.5M2 0.5V3.2H6" stroke="#444" stroke-width="0.6" fill="none"/>
</svg>
<div class="t" style="left:671.5px;top:652.41px;height:21px;line-height:21px;font-size:14.7px;color:#000;font-family:'Liberation Sans', sans-serif;font-weight:400;font-style:normal;"><span style="font-family:'Liberation Mono',monospace;font-size:12.0px;letter-spacing:-0.2px">AgiConfig</span> (CLASS) [7.4 KB]</div>
<div class="b" style="left:617px;top:687.8px;width:5px;height:5px;border-radius:50%;background:#000"></div>
<svg style="left:628px;top:681px" width="16" height="16" viewBox="0 0 16 16">
<path d="M0.8 4.5L8.8 1L15 3.8V12L6.8 15.5L0.8 12Z" fill="none" stroke="#2a2a2a" stroke-width="0.85"/>
<path d="M0.8 4.5L6.8 7.5L15 3.8M6.8 7.5V15.5M3.6 3.2L10.8 6.4V8.8" fill="none" stroke="#2a2a2a" stroke-width="0.85"/>
</svg>
<div class="t" style="left:648px;top:682.60px;height:17px;line-height:17px;font-size:12.0px;color:#000;font-family:'Liberation Mono', monospace;font-weight:400;font-style:normal;letter-spacing:-0.2px;">uno.anahata.asi.agi.context</div>
<div class="b" style="left:642px;top:716.3px;width:6px;height:6px;border-radius:50%;border:1px solid #000"></div>
<svg style="left:655.5px;top:711px" width="8" height="11" viewBox="0 0 8 11">
<path d="M0.5 0.5H6L7.5 2V10.5H0.5Z" fill="none" stroke="#222" stroke-width="0.9"/>
<path d="M2.2 4.5H5.5M2.2 6.5H5.5M2.2 8.5H5.5M2 0.5V3.2H6" stroke="#444" stroke-width="0.6" fill="none"/>
</svg>
<div class="t" style="left:671.5px;top:706.21px;height:21px;line-height:21px;font-size:14.7px;color:#000;font-family:'Liberation Sans', sans-serif;font-weight:400;font-style:normal;"><span style="font-family:'Liberation Mono',monospace;font-size:12.0px;letter-spacing:-0.2px">package-info</span> (PACKAGE) [240 B]</div>
<div class="b" style="left:642px;top:733.1px;width:6px;height:6px;border-radius:50%;border:1px solid #000"></div>
<svg style="left:655.5px;top:728px" width="8" height="11" viewBox="0 0 8 11">
<path d="M0.5 0.5H6L7.5 2V10.5H0.5Z" fill="none" stroke="#222" stroke-width="0.9"/>
<path d="M2.2 4.5H5.5M2.2 6.5H5.5M2.2 8.5H5.5M2 0.5V3.2H6" stroke="#444" stroke-width="0.6" fill="none"/>
</svg>
<div class="t" style="left:671.5px;top:723.06px;height:21px;line-height:21px;font-size:14.7px;color:#000;font-family:'Liberation Sans', sans-serif;font-weight:400;font-style:normal;"><span style="font-family:'Liberation Mono',monospace;font-size:12.0px;letter-spacing:-0.2px">BasicContextProvider</span> (CLASS) [1.9 KB]</div>
<div class="b" style="left:642px;top:750.0px;width:6px;height:6px;border-radius:50%;border:1px solid #000"></div>
<svg style="left:655.5px;top:745px" width="8" height="11" viewBox="0 0 8 11">
<path d="M0.5 0.5H6L7.5 2V10.5H0.5Z" fill="none" stroke="#222" stroke-width="0.9"/>
<path d="M2.2 4.5H5.5M2.2 6.5H5.5M2.2 8.5H5.5M2 0.5V3.2H6" stroke="#444" stroke-width="0.6" fill="none"/>
</svg>
<div class="t" style="left:671.5px;top:739.91px;height:21px;line-height:21px;font-size:14.7px;color:#000;font-family:'Liberation Sans', sans-serif;font-weight:400;font-style:normal;"><span style="font-family:'Liberation Mono',monospace;font-size:12.0px;letter-spacing:-0.2px">ContextManager</span> (CLASS) [12.1 KB]</div>
<div class="b" style="left:642px;top:766.8px;width:6px;height:6px;border-radius:50%;border:1px solid #000"></div>
<svg style="left:655.5px;top:762px" width="8" height="11" viewBox="0 0 8 11">
<path d="M0.5 0.5H6L7.5 2V10.5H0.5Z" fill="none" stroke="#222" stroke-width="0.9"/>
<path d="M2.2 4.5H5.5M2.2 6.5H5.5M2.2 8.5H5.5M2 0.5V3.2H6" stroke="#444" stroke-width="0.6" fill="none"/>
</svg>
<div class="t" style="left:671.5px;top:756.76px;height:21px;line-height:21px;font-size:14.7px;color:#000;font-family:'Liberation Sans', sans-serif;font-weight:400;font-style:normal;"><span style="font-family:'Liberation Mono',monospace;font-size:12.0px;letter-spacing:-0.2px">ContextPosition</span> (ENUM) [891 B]</div>
<div class="b" style="left:642px;top:783.7px;width:6px;height:6px;border-radius:50%;border:1px solid #000"></div>
<svg style="left:655.5px;top:779px" width="8" height="11" viewBox="0 0 8 11">
<path d="M0.5 0.5H6L7.5 2V10.5H0.5Z" fill="none" stroke="#222" stroke-width="0.9"/>
<path d="M2.2 4.5H5.5M2.2 6.5H5.5M2.2 8.5H5.5M2 0.5V3.2H6" stroke="#444" stroke-width="0.6" fill="none"/>
</svg>
<div class="t" style="left:671.5px;top:773.61px;height:21px;line-height:21px;font-size:14.7px;color:#000;font-family:'Liberation Sans', sans-serif;font-weight:400;font-style:normal;"><span style="font-family:'Liberation Mono',monospace;font-size:12.0px;letter-spacing:-0.2px">ContextProvider</span> (INTERFACE) [7.8 KB]</div>
<div class="b" style="left:642px;top:800.5px;width:6px;height:6px;border-radius:50%;border:1px solid #000"></div>
<svg style="left:655.5px;top:796px" width="8" height="11" viewBox="0 0 8 11">
<path d="M0.5 0.5H6L7.5 2V10.5H0.5Z" fill="none" stroke="#222" stroke-width="0.9"/>
<path d="M2.2 4.5H5.5M2.2 6.5H5.5M2.2 8.5H5.5M2 0.5V3.2H6" stroke="#444" stroke-width="0.6" fill="none"/>
</svg>
<div class="t" style="left:671.5px;top:790.46px;height:21px;line-height:21px;font-size:14.7px;color:#000;font-family:'Liberation Sans', sans-serif;font-weight:400;font-style:normal;"><span style="font-family:'Liberation Mono',monospace;font-size:12.0px;letter-spacing:-0.2px">ContextWindowGarbageCollector</span> (CLASS) [5.7 KB]</div>
<div class="b" style="left:667px;top:828.0px;width:6px;height:6px;border:1px solid #000"></div>
<div class="t" style="left:677px;top:817.91px;height:21px;line-height:21px;font-size:14.7px;color:#000;font-family:'Liberation Sans', sans-serif;font-weight:400;font-style:normal;"><span style="font-family:'Liberation Mono',monospace;font-size:12.0px;letter-spacing:-0.2px">Stats</span> (CLASS)</div>
<div class="b" style="left:692px;top:855.3px;width:6px;height:6px;border:1px solid #000"></div>
<div class="t" style="left:702px;top:845.21px;height:21px;line-height:21px;font-size:14.7px;color:#000;font-family:'Liberation Sans', sans-serif;font-weight:400;font-style:normal;"><span style="font-family:'Liberation Mono',monospace;font-size:12.0px;letter-spacing:-0.2px">StatsBuilder</span> (CLASS)</div>
<div class="b" style="left:642px;top:891.9px;width:6px;height:6px;border-radius:50%;border:1px solid #000"></div>
<svg style="left:655.5px;top:887px" width="8" height="11" viewBox="0 0 8 11">
<path d="M0.5 0.5H6L7.5 2V10.5H0.5Z" fill="none" stroke="#222" stroke-width="0.9"/>
<path d="M2.2 4.5H5.5M2.2 6.5H5.5M2.2 8.5H5.5M2 0.5V3.2H6" stroke="#444" stroke-width="0.6" fill="none"/>
</svg>
<div class="t" style="left:671.5px;top:881.81px;height:21px;line-height:21px;font-size:14.7px;color:#000;font-family:'Liberation Sans', sans-serif;font-weight:400;font-style:normal;"><span style="font-family:'Liberation Mono',monospace;font-size:12.0px;letter-spacing:-0.2px">GarbageCollectorRecord</span> (CLASS) [827 B]</div>
</body></html>
